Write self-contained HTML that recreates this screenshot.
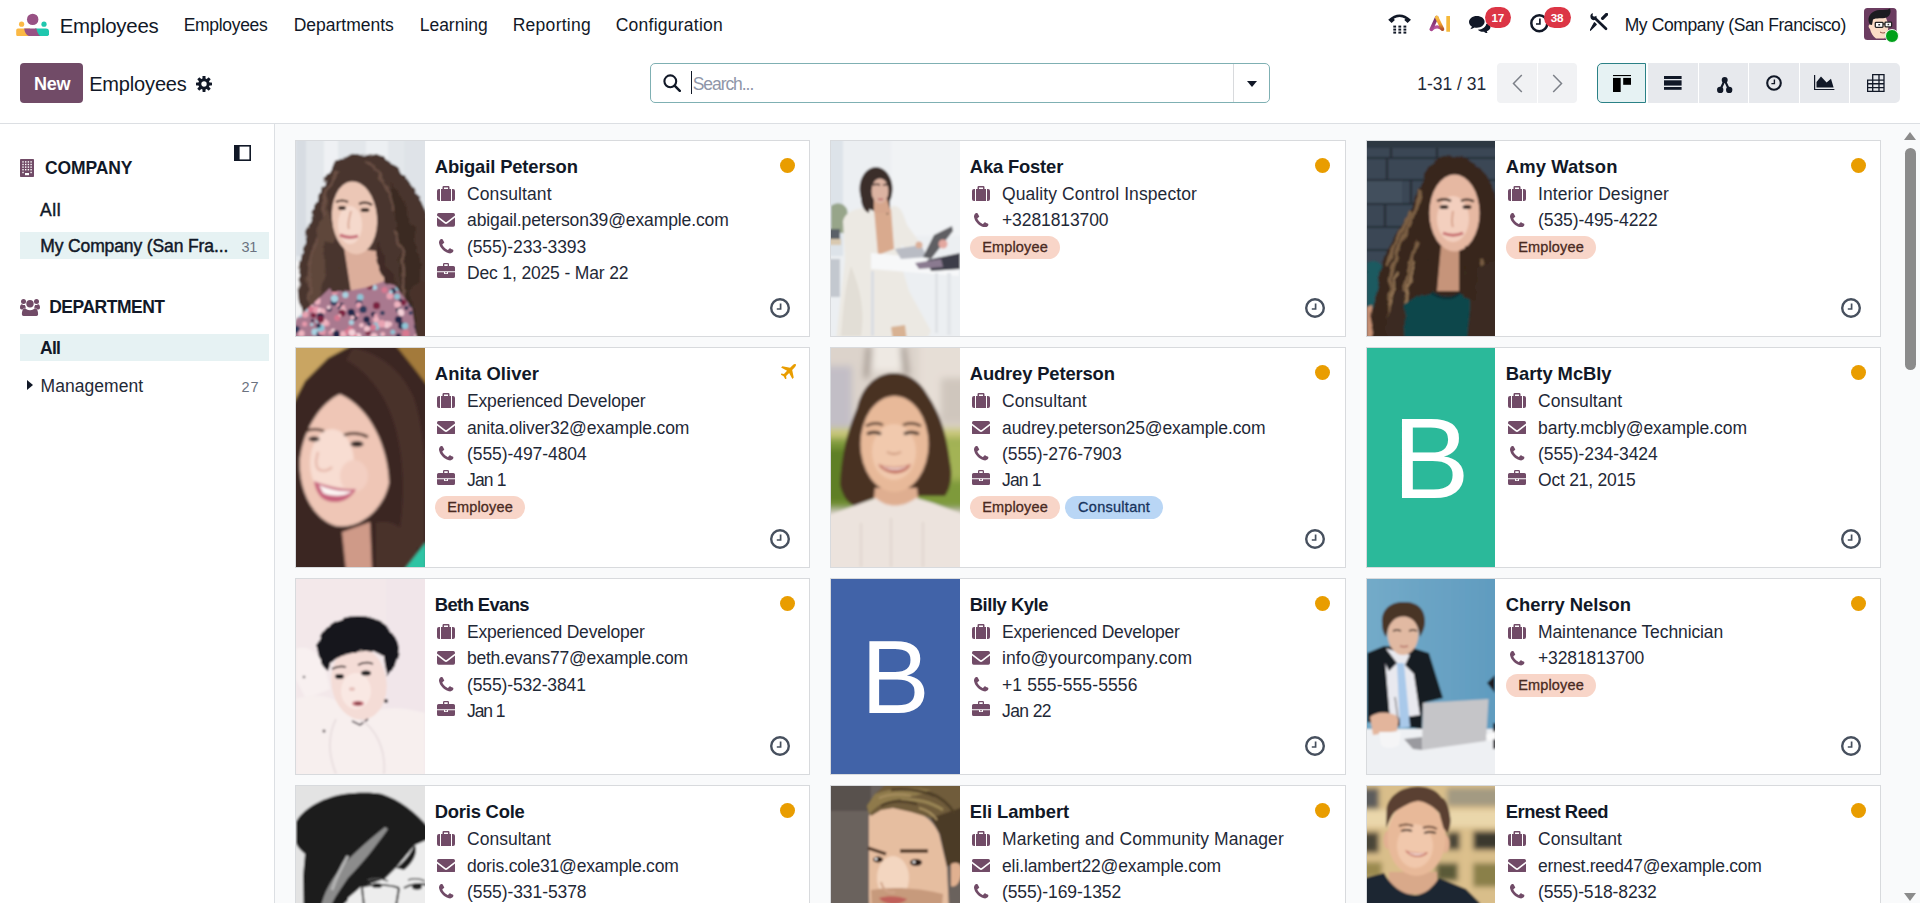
<!DOCTYPE html><html lang="en"><head><meta charset="utf-8"><title>Odoo - Employees</title>
<style>
*{box-sizing:border-box;margin:0;padding:0}
html,body{width:1920px;height:903px;overflow:hidden;background:#fff}
body{font-family:"Liberation Sans",sans-serif;color:#1f2937;position:relative;-webkit-font-smoothing:antialiased}
.t{position:absolute;white-space:nowrap;line-height:1;display:block}
.i{position:absolute;display:block;line-height:0}
.i svg,.ph{display:block}
.m{-webkit-text-stroke:.45px currentColor}
header.nav{position:absolute;left:0;top:0;width:1920px;height:46px;background:#fff}
.cp{position:absolute;left:0;top:46px;width:1920px;height:78px;background:#fff;border-bottom:1px solid #dcdfe3}
.btn-new{position:absolute;left:20px;top:17px;width:63px;height:40px;border-radius:4px;background:#714b67;border:0;padding:0;font-family:inherit;text-align:left}
.search{position:absolute;left:650px;top:17px;width:620px;height:40px;border:1px solid #7fb0b3;border-radius:5px;background:#fff}
.search .sep{position:absolute;left:582px;top:0;width:1px;height:38px;background:#d8dadd}
.search .caret{position:absolute;left:40px;top:7px;width:1px;height:23px;background:#111827}
.tri{position:absolute;width:0;height:0;border-left:5.5px solid transparent;border-right:5.5px solid transparent;border-top:6px solid #111827}
.pager{position:absolute;left:1497px;top:17px;width:80px;height:40px;display:flex;gap:1px}
.pager b{display:block;flex:1;background:#f1f2f4;position:relative}
.pager b:first-child{border-radius:4px 0 0 4px}.pager b:last-child{border-radius:0 4px 4px 0}
.vs{position:absolute;left:1597px;top:17px;width:303px;height:40px;display:flex;gap:1px}
.vs b{display:block;flex:1;background:#e7e9ed;position:relative}
.vs b:first-child{flex:0 0 49px;margin-right:1px;border-radius:5px 0 0 5px;background:#e6f2f3;border:1px solid #2a8186}
.vs b:last-child{border-radius:0 5px 5px 0}
.badge{position:absolute;height:21px;border-radius:11px;background:#dc3545;color:#fff;font-weight:700;font-size:11.7px;line-height:21px;text-align:center;letter-spacing:-.2px}
aside.side{position:absolute;left:0;top:124px;width:275px;height:779px;background:#fff;border-right:1px solid #dcdfe3}
.sel{position:absolute;left:20px;width:249px;background:#e6f2f3}
main.content{position:absolute;left:275px;top:124px;width:1645px;height:779px;background:#f9fafb;overflow:hidden}
article.card{position:absolute;background:#fff;border:1px solid #d8dadd;overflow:hidden}
.photo{position:absolute;left:0;top:0;overflow:hidden}
.ini{position:absolute;left:0;top:0;color:#fff;text-align:center;font-weight:400}
.dot{position:absolute;width:15px;height:15px;border-radius:50%;background:#e99d00}
.tag{position:absolute;height:23px;border-radius:12px;font-size:14.5px;line-height:23px;text-align:center;white-space:nowrap}
.tag{-webkit-text-stroke:.3px currentColor}.tag.o{background:#f8d5c8;color:#4a2a22;letter-spacing:.17px}.tag.b{background:#b9d6f5;color:#17335c;letter-spacing:.28px}
.sb-thumb{position:absolute;left:1905px;top:148px;width:11px;height:222px;border-radius:6px;background:#8b8b8b}
</style></head><body>
<header class="nav">
<span class="i" style="left:15.8px;top:12.5px;"><svg width="33.2" height="23.4" viewBox="0 0 33.2 23.4" ><path d="M2 15.4H14V23.2H2A1.8 1.8 0 0 1 .2 21.4V17.2A1.8 1.8 0 0 1 2 15.4z" fill="#fbb945"/><path d="M19 15.4H30.1A3 3 0 0 1 33.1 18.4V20.2A3 3 0 0 1 30.1 23.2H19z" fill="#1fc7ae"/><path d="M8.2 15.4C8.6 19.5 10.4 22 13.3 23.2H24.5C22.4 21.8 21 19 20.5 15.4z" fill="#985184"/><circle cx="16.7" cy="6.4" r="5.7" fill="#985184"/><circle cx="5.6" cy="11.2" r="2.6" fill="#fbb945"/><circle cx="28" cy="11.2" r="2.6" fill="#1fc7ae"/></svg></span>
<span class="t" style="left:59.7px;top:16.1px;font-size:20.4px;color:#111827;letter-spacing:-0.222px;">Employees</span>
<nav>
<a class="t" style="left:183.7px;top:16.9px;font-size:17.5px;color:#111827;letter-spacing:-0.31px;">Employees</a>
<a class="t" style="left:293.7px;top:16.9px;font-size:17.5px;color:#111827;letter-spacing:-0.009px;">Departments</a>
<a class="t" style="left:419.7px;top:16.9px;font-size:17.5px;color:#111827;letter-spacing:-0.004px;">Learning</a>
<a class="t" style="left:512.7px;top:16.9px;font-size:17.5px;color:#111827;letter-spacing:0.276px;">Reporting</a>
<a class="t" style="left:615.7px;top:16.9px;font-size:17.5px;color:#111827;letter-spacing:0.249px;">Configuration</a>
</nav>
<span class="i" style="left:1387.7px;top:14.4px;"><svg width="23.2" height="19.4" viewBox="0 0 23.2 19.4" ><path d="M.2 5.8Q11.6 -5 23 5.8L19.6 9.1 16.3 5.9 17.5 4.7Q11.6 1.3 5.7 4.7L6.9 5.9 3.6 9.1z" fill="#111827"/><rect x="5.3" y="11.6" width="2.8" height="2" fill="#111827"/><rect x="10.4" y="11.6" width="2.8" height="2" fill="#111827"/><rect x="15.5" y="11.6" width="2.8" height="2" fill="#111827"/><rect x="5.3" y="14.6" width="2.8" height="2" fill="#111827"/><rect x="10.4" y="14.6" width="2.8" height="2" fill="#111827"/><rect x="15.5" y="14.6" width="2.8" height="2" fill="#111827"/><rect x="5.3" y="17.6" width="2.8" height="2" fill="#111827"/><rect x="10.4" y="17.6" width="2.8" height="2" fill="#111827"/><rect x="15.5" y="17.6" width="2.8" height="2" fill="#111827"/></svg></span>
<span class="i" style="left:1428.9px;top:14.8px;"><svg width="21.5" height="17" viewBox="0 0 21.5 17" ><defs><linearGradient id="aig1" x1="0" y1="0" x2="1" y2="0"><stop offset="0" stop-color="#b9539d"/><stop offset=".55" stop-color="#b9539d"/><stop offset="1" stop-color="#b5522a"/></linearGradient><linearGradient id="aig2" x1="0" y1="0" x2="0" y2="1"><stop offset="0" stop-color="#f7bd45"/><stop offset=".55" stop-color="#f0a030"/><stop offset="1" stop-color="#b5522a"/></linearGradient><linearGradient id="aig3" x1="0" y1="0" x2="0" y2="1"><stop offset="0" stop-color="#6f2a66"/><stop offset="1" stop-color="#a8488f"/></linearGradient></defs><path d="M2.4 14.5Q8 9.3 13.5 14.3" fill="none" stroke="url(#aig1)" stroke-width="3.2" stroke-linecap="round"/><path d="M7.7 2.6L2.3 14.2" fill="none" stroke="url(#aig3)" stroke-width="3.5" stroke-linecap="round"/><path d="M7.7 2.4L13.5 14" fill="none" stroke="url(#aig2)" stroke-width="3.5" stroke-linecap="round"/><rect x="17.3" y=".9" width="4" height="15.8" rx=".5" fill="#f6b93b"/></svg></span>
<span class="i" style="left:1469px;top:15.7px;"><svg width="21.6" height="17.8" viewBox="0 0 21.6 17.8" ><path d="M7.8 0C3.5 0 0 2.7 0 6c0 1.9 1.1 3.5 2.9 4.6-.3 1-.9 1.9-1.7 2.6 1.7-.2 3.2-.8 4.4-1.7.7.1 1.4.2 2.2.2 4.3 0 7.8-2.7 7.8-6S12.1 0 7.8 0z" fill="#111827"/><path d="M17.3 7.2c.1 3.6-3.6 6.5-8.6 6.6 1.5 1.5 3.9 2.3 6.4 2 .9.9 2.3 1.6 4.1 1.9-.7-.7-1.2-1.5-1.4-2.4 2.2-.9 3.7-2.5 3.7-4.3 0-1.7-1.6-3.2-4.2-3.8z" fill="#111827"/></svg></span>
<span class="badge" style="left:1485px;top:6.5px;width:25.5px">17</span>
<span class="i" style="left:1529.6px;top:14.4px;"><svg width="18.6" height="18.6" viewBox="0 0 18.6 18.6" ><circle cx="9.3" cy="9.3" r="8" fill="none" stroke="#111827" stroke-width="2.5"/><path d="M9.9 4.5V10H6" fill="none" stroke="#111827" stroke-width="1.7"/></svg></span>
<span class="badge" style="left:1543.5px;top:6.5px;width:27px">38</span>
<span class="i" style="left:1590px;top:13.2px;"><svg width="17.6" height="17.6" viewBox="0 0 17.6 17.6" ><g fill="none" stroke="#111827"><path d="M4.8 5L16 15.8" stroke-width="2.7" stroke-linecap="round"/><path d="M12.6 5.3L16.6 1.4" stroke-width="3.2" stroke-linecap="round"/></g><path d="M6.2 11.5L.3 17.3 2.3 13.6 4.4 9.7z" fill="#111827" stroke="#111827" stroke-width="1.2" stroke-linejoin="round"/><path d="M.4 3.3C.2 1.6 1.4.3 3 .2L2.5 2.6 4.3 3.9 6.3 2.8C7 4.3 6.4 6 5 6.8 3.6 7.5 1.9 7.1 1 5.8.6 5 .4 4.2.4 3.3z" fill="#111827"/></svg></span>
<span class="t" style="left:1624.7px;top:16.9px;font-size:17.5px;color:#111827;letter-spacing:-0.395px;">My Company (San Francisco)</span>
<span class="i" style="left:1864px;top:8px;"><svg width="32.6" height="32" viewBox="0 0 32.6 32" ><rect width="32.6" height="32" rx="3.5" fill="#6b3c60"/><path d="M6 21c-1.5-1-2-3.5-.5-4.5l1.5-.5 1.5-6 13-1.5 2.5 6.5c1 4 0 9-2 12.5l-1.5 3H12c-3-2-5-5.5-6-9.5z" fill="#fbdcc6"/><path d="M4.5 12C4 7 9 2.5 15.5 2c4-.3 8 .2 10.5-1.5C27.5 4 26 8 22.5 9.5 18 11 12 9.5 9 11.5L8 17 6 16.5C5 15 4.6 13.5 4.5 12z" fill="#1c1c20"/><rect x="11.3" y="14.3" width="7.7" height="5" rx=".8" fill="#fff" stroke="#222" stroke-width="1.3"/><rect x="21" y="14.1" width="6.6" height="4.8" rx=".8" fill="#fff" stroke="#222" stroke-width="1.3"/><path d="M19 16h2" stroke="#222" stroke-width="1.2"/><rect x="14.3" y="16" width="1.8" height="1.5" fill="#333"/><rect x="23.6" y="15.8" width="1.6" height="1.5" fill="#333"/><path d="M16 24c1.5 1 3.5 1.2 5 .6" stroke="#8a4a40" stroke-width="1" fill="none"/></svg></span>
<span class="i" style="left:1884.5px;top:28.5px;width:14.5px;height:14.5px;border-radius:50%;background:#00a01a;border:1px solid #f4fff4"></span>
</header>
<div class="cp">
<button class="btn-new" type="button"><span class="t" style="left:14px;top:12.4px;font-size:18px;font-weight:700;color:#fff;letter-spacing:-0.308px;">New</span></button>
<span class="t" style="left:89.2px;top:28.4px;font-size:20px;color:#111827;letter-spacing:-0.167px;">Employees</span>
<span class="i" style="left:196px;top:29.5px;"><svg width="16" height="16" viewBox="0 0 16 16" ><g fill="#111827"><rect x="6.5" y="0" width="3" height="4" rx=".4" transform="rotate(0 8 8)"/><rect x="6.5" y="0" width="3" height="4" rx=".4" transform="rotate(45 8 8)"/><rect x="6.5" y="0" width="3" height="4" rx=".4" transform="rotate(90 8 8)"/><rect x="6.5" y="0" width="3" height="4" rx=".4" transform="rotate(135 8 8)"/><rect x="6.5" y="0" width="3" height="4" rx=".4" transform="rotate(180 8 8)"/><rect x="6.5" y="0" width="3" height="4" rx=".4" transform="rotate(225 8 8)"/><rect x="6.5" y="0" width="3" height="4" rx=".4" transform="rotate(270 8 8)"/><rect x="6.5" y="0" width="3" height="4" rx=".4" transform="rotate(315 8 8)"/></g><circle cx="8" cy="8" r="4.2" fill="none" stroke="#111827" stroke-width="3"/></svg></span>
<div class="search">
<span class="i" style="left:12px;top:10.4px;"><svg width="18" height="18" viewBox="0 0 18 18" ><circle cx="7.3" cy="7.3" r="5.9" fill="none" stroke="#111827" stroke-width="2.1"/><path d="M11.6 11.6L16.8 16.8" stroke="#111827" stroke-width="2.5" stroke-linecap="round"/></svg></span>
<i class="caret"></i>
<span class="t" style="left:41.7px;top:11.7px;font-size:17.5px;color:#8f96a8;letter-spacing:-1.056px;">Search...</span>
<i class="sep"></i><i class="tri" style="left:596px;top:17px"></i>
</div>
<span class="t" style="left:1417.2px;top:29.9px;font-size:17.5px;letter-spacing:0.003px;">1-31 / 31</span>
<div class="pager"><b><span class="i" style="left:14.5px;top:10.5px;"><svg width="11" height="19" viewBox="0 0 11 19"><path d="M9.8 1L1.5 9.5 9.8 18" fill="none" stroke="#7c8088" stroke-width="1.5"/></svg></span></b><b><span class="i" style="left:14px;top:10.5px;"><svg width="11" height="19" viewBox="0 0 11 19"><path d="M1.2 1L9.5 9.5 1.2 18" fill="none" stroke="#7c8088" stroke-width="1.5"/></svg></span></b></div>
<div class="vs">
<b><span class="i" style="left:14.8px;top:10.9px;"><svg width="18.4" height="17.6" viewBox="0 0 18.4 17.6" ><rect x="0" y="0" width="18.4" height="1.1" fill="#000"/><rect x="0" y="2.9" width="7.7" height="14.7" fill="#000"/><rect x="10.2" y="2.9" width="8.2" height="6.9" fill="#000"/></svg></span></b>
<b><span class="i" style="left:16.4px;top:13px;"><svg width="17.6" height="13.8" viewBox="0 0 17.6 13.8" ><rect x="0" y="0" width="17.6" height="3" fill="#111827"/><rect x="0" y="4.3" width="17.6" height="5.3" fill="#111827"/><rect x="0" y="11" width="17.6" height="2.8" fill="#111827"/></svg></span></b>
<b><span class="i" style="left:18.7px;top:13.8px;"><svg width="15.4" height="16.2" viewBox="0 0 15.4 16.2" ><g fill="#111827" stroke="#111827"><circle cx="7.7" cy="3.1" r="3" stroke="none"/><circle cx="3.2" cy="13" r="3.2" stroke="none"/><circle cx="12.2" cy="13" r="3.2" stroke="none"/><path d="M7.7 3.1L3.2 13M7.7 3.1L12.2 13" stroke-width="2.2" fill="none"/></g></svg></span></b>
<b><span class="i" style="left:17.2px;top:12.4px;"><svg width="16" height="16" viewBox="0 0 16 16" ><circle cx="8" cy="8" r="6.8" fill="none" stroke="#111827" stroke-width="2.1"/><path d="M8.4 4.6V8.6H5.4" fill="none" stroke="#111827" stroke-width="1.4"/></svg></span></b>
<b><span class="i" style="left:14.7px;top:12.4px;"><svg width="20.6" height="15.2" viewBox="0 0 20.6 15.2" ><path d="M.6 0V14.5H20.4" fill="none" stroke="#111827" stroke-width="1.2"/><path d="M2.5 12.6V6.9L7 1.5L12.6 7.4L17 3.8L19.6 12.6z" fill="#111827"/></svg></span></b>
<b><span class="i" style="left:16.6px;top:11.2px;"><svg width="17.6" height="17.9" viewBox="0 0 17.6 17.9" ><path d="M5.7 0.6H17M0.6 6.2H17M0.6 9.75H17M0.6 13.7H17M0.6 17.3H17M0.6 6.2V17.3M5.7 0.6V17.3M12 0.6V17.3M17 0.6V17.3" fill="none" stroke="#111827" stroke-width="1.3" stroke-linecap="square"/></svg></span></b>
</div>
</div>
<aside class="side">
<span class="i" style="left:234px;top:21px;"><svg width="17" height="16" viewBox="0 0 17 16" ><rect x=".8" y=".8" width="15.4" height="14.4" fill="none" stroke="#111827" stroke-width="1.6"/><rect x="0" y="0" width="5.6" height="16" fill="#111827"/></svg></span>
<span class="i" style="left:20px;top:34.5px;"><svg width="14" height="18" viewBox="0 0 14 18" ><rect x="0" y="0" width="14" height="18" rx=".8" fill="#714b67"/><rect x="2.3" y="2.2" width="1.4" height="1.4" fill="#fff"/><rect x="5" y="2.2" width="1.4" height="1.4" fill="#fff"/><rect x="7.7" y="2.2" width="1.4" height="1.4" fill="#fff"/><rect x="10.400000000000002" y="2.2" width="1.4" height="1.4" fill="#fff"/><rect x="2.3" y="4.800000000000001" width="1.4" height="1.4" fill="#fff"/><rect x="5" y="4.800000000000001" width="1.4" height="1.4" fill="#fff"/><rect x="7.7" y="4.800000000000001" width="1.4" height="1.4" fill="#fff"/><rect x="10.400000000000002" y="4.800000000000001" width="1.4" height="1.4" fill="#fff"/><rect x="2.3" y="7.4" width="1.4" height="1.4" fill="#fff"/><rect x="5" y="7.4" width="1.4" height="1.4" fill="#fff"/><rect x="7.7" y="7.4" width="1.4" height="1.4" fill="#fff"/><rect x="10.400000000000002" y="7.4" width="1.4" height="1.4" fill="#fff"/><rect x="2.3" y="10" width="1.4" height="1.4" fill="#fff"/><rect x="5" y="10" width="1.4" height="1.4" fill="#fff"/><rect x="7.7" y="10" width="1.4" height="1.4" fill="#fff"/><rect x="10.400000000000002" y="10" width="1.4" height="1.4" fill="#fff"/><rect x="2.3" y="12.8" width="1.4" height="1.4" fill="#fff"/><rect x="10.4" y="12.8" width="1.4" height="1.4" fill="#fff"/><rect x="5" y="14" width="4" height="2.2" fill="#fff"/></svg></span>
<span class="t" style="left:45px;top:35.8px;font-size:17.5px;font-weight:700;color:#111827;letter-spacing:-0.126px;">COMPANY</span>
<span class="t m" style="left:40.1px;top:77.6px;font-size:17.5px;color:#111827;letter-spacing:0.573px;">All</span>
<div class="sel" style="top:108px;height:26.5px"></div>
<span class="t m" style="left:40.2px;top:113.6px;font-size:17.5px;color:#111827;letter-spacing:-0.12px;">My Company (San Fra...</span>
<span class="t" style="left:241.5px;top:115.9px;font-size:14.5px;color:#6b7280;letter-spacing:-0.341px;">31</span>
<span class="i" style="left:20.2px;top:173.8px;"><svg width="20" height="18" viewBox="0 0 20 18" ><g fill="#714b67"><circle cx="10" cy="5.8" r="3.7"/><path d="M3.6 18c-1 0-1.7-.7-1.7-1.7 0-3.3 1-6 3.3-6 .6.7 2.3 1.9 4.8 1.9s4.2-1.2 4.8-1.9c2.3 0 3.3 2.7 3.3 6 0 1-.7 1.7-1.7 1.7z"/><circle cx="3.5" cy="3.4" r="2.5"/><circle cx="16.5" cy="3.4" r="2.5"/><path d="M0 9.6C0 7.6.7 6.2 2 6.2c.8.7 1.8 1 2.9.8.2.9.6 1.7 1.2 2.4-1.5.1-2.6.8-3.3 2.1H1.6C.6 11.5 0 10.9 0 9.6z"/><path d="M20 9.6c0-2-.7-3.4-2-3.4-.8.7-1.8 1-2.9.8-.2.9-.6 1.7-1.2 2.4 1.5.1 2.6.8 3.3 2.1h1.2c1 0 1.6-.6 1.6-1.9z"/></g></svg></span>
<span class="t" style="left:49.2px;top:174.8px;font-size:17.5px;font-weight:700;color:#111827;letter-spacing:-0.493px;">DEPARTMENT</span>
<div class="sel" style="top:210px;height:26.7px"></div>
<span class="t" style="left:40.1px;top:215.5px;font-size:17.5px;font-weight:700;color:#111827;letter-spacing:-0.737px;">All</span>
<i class="i" style="left:27px;top:256.2px;width:0;height:0;border-top:5.7px solid transparent;border-bottom:5.7px solid transparent;border-left:6.3px solid #111827"></i>
<span class="t" style="left:40.5px;top:253.5px;font-size:17.5px;letter-spacing:0.049px;">Management</span>
<span class="t" style="left:241.5px;top:256px;font-size:14.5px;color:#6b7280;letter-spacing:1.059px;">27</span>
</aside>
<main class="content">
<article class="card" style="left:20px;top:16px;width:515px;height:197px">
<div class="photo" style="width:129px;height:195px"><svg class="ph" width="129" height="195" viewBox="0 0 129 195" preserveAspectRatio="none"><defs><filter id="bp1" x="-10%" y="-10%" width="120%" height="120%"><feGaussianBlur stdDeviation="1.1"/></filter><clipPath id="cp1"><rect width="129" height="195"/></clipPath></defs><rect width="129" height="195" fill="#e2e6ea"/><g clip-path="url(#cp1)"><g filter="url(#bp1)"><defs><filter id="k1" x="-20%" y="-20%" width="140%" height="140%"><feTurbulence type="fractalNoise" baseFrequency="0.085" numOctaves="2" seed="4" result="n"/><feDisplacementMap in="SourceGraphic" in2="n" scale="9" xChannelSelector="R" yChannelSelector="G"/></filter><clipPath id="d1"><path d="M0 178L17 163 35 146 52 150 72 146 94 138 116 167 121 200H-5Z"/></clipPath></defs>
<rect x="-5" y="-5" width="140" height="205" fill="#e3e7eb"/>
<rect x="0" y="-5" width="10" height="120" fill="#d7dce2"/><rect x="28" y="-5" width="14" height="60" fill="#eff1f4"/>
<rect x="70" y="-5" width="22" height="40" fill="#edf0f3"/><rect x="108" y="-5" width="25" height="70" fill="#dfe3e8"/>
<rect x="-5" y="120" width="20" height="80" fill="#f2f2f3"/>
<g filter="url(#k1)">
<path d="M62 13C45 14 32 27 26 50 16 72 8 95 4 125 1 145 3 165 9 180L40 200H135V82C126 58 113 34 91 18 81 13 71 12 62 13Z" fill="#4a352d"/>
<path d="M30 60C22 85 14 110 10 140 12 160 16 172 22 178 26 150 30 120 38 95Z" fill="#5e463b"/>
<path d="M95 40C110 60 120 90 124 130 126 160 124 180 120 195H100C108 150 104 90 95 40Z" fill="#3b2923"/>
<path d="M70 20C85 30 95 50 98 70M40 30C32 45 28 60 27 75M100 90C108 110 110 140 106 170M20 100C14 120 12 140 14 160" stroke="#6a5044" stroke-width="3" fill="none"/>
</g>
<path d="M48 106L80 110 90 141 72 147 55 151Z" fill="#dcae9b"/>
<ellipse cx="58.5" cy="77" rx="22.5" ry="36.5" fill="#ecc7b6" transform="rotate(-5 58 77)"/>
<ellipse cx="54" cy="84" rx="12" ry="19" fill="#f5d9cc"/>
<path d="M40 61q6-3 12 0M63 63q7-3 13 1" stroke="#3a2820" stroke-width="2.2" fill="none"/>
<ellipse cx="46" cy="67" rx="4" ry="2" fill="#33241f"/><ellipse cx="69" cy="69" rx="4.5" ry="2" fill="#33241f"/>
<path d="M55 70C53 78 51 84 53 88" stroke="#dcae9c" stroke-width="2" fill="none"/>
<path d="M44 94q8 4 18 1" stroke="#c8707a" stroke-width="3.2" fill="none"/>
<g clip-path="url(#d1)"><rect x="-5" y="130" width="140" height="70" fill="#a9798f"/><circle cx="55.2" cy="171.3" r="3.6" fill="#232848"/><circle cx="55.1" cy="187.9" r="2" fill="#d87890"/><circle cx="58" cy="174.4" r="2" fill="#232848"/><circle cx="37" cy="145.1" r="3.4" fill="#f2c2cc"/><circle cx="77.4" cy="173.3" r="2.5" fill="#232848"/><circle cx="79.8" cy="174.5" r="1.9" fill="#e8a3b2"/><circle cx="101.5" cy="143.5" r="1.7" fill="#a9d3e2"/><circle cx="73.2" cy="183.6" r="2.3" fill="#2f3a5c"/><circle cx="102.8" cy="169.1" r="3" fill="#232848"/><circle cx="0.6" cy="144.8" r="3" fill="#f4d0d8"/><circle cx="121.7" cy="195.8" r="3.4" fill="#f2c2cc"/><circle cx="31" cy="182.4" r="2.7" fill="#e8a3b2"/><circle cx="8.6" cy="182.9" r="2.5" fill="#e79aac"/><circle cx="47.2" cy="193.7" r="3.5" fill="#e8a3b2"/><circle cx="26" cy="191.9" r="1.7" fill="#f4d0d8"/><circle cx="119.6" cy="162.3" r="1.8" fill="#8fc4d6"/><circle cx="24.2" cy="177.8" r="2.3" fill="#e79aac"/><circle cx="40.6" cy="194" r="3.3" fill="#232848"/><circle cx="16.4" cy="179.6" r="1.6" fill="#232848"/><circle cx="97.2" cy="149.9" r="2.8" fill="#232848"/><circle cx="62.1" cy="195.2" r="3.3" fill="#f4d0d8"/><circle cx="78.5" cy="146.5" r="2.5" fill="#a9d3e2"/><circle cx="0.1" cy="188.4" r="3.7" fill="#2f3a5c"/><circle cx="37.1" cy="189.6" r="2.1" fill="#f4d0d8"/><circle cx="121.5" cy="173.7" r="2.9" fill="#e8a3b2"/><circle cx="120.7" cy="151.9" r="2.2" fill="#2f3a5c"/><circle cx="40.1" cy="156.6" r="1.8" fill="#232848"/><circle cx="25.5" cy="175.6" r="1.6" fill="#7a2240"/><circle cx="45.3" cy="165.4" r="3.7" fill="#232848"/><circle cx="101.5" cy="147.6" r="2.4" fill="#8fc4d6"/><circle cx="18.8" cy="190.9" r="3.4" fill="#a9d3e2"/><circle cx="88.5" cy="148.9" r="3" fill="#d87890"/><circle cx="24" cy="193.2" r="3.5" fill="#2f3a5c"/><circle cx="9.6" cy="142.7" r="1.8" fill="#d87890"/><circle cx="117.4" cy="153.4" r="3.2" fill="#e79aac"/><circle cx="51.3" cy="190.7" r="2.7" fill="#d87890"/><circle cx="21.4" cy="180.3" r="1.8" fill="#a9d3e2"/><circle cx="58.5" cy="176.6" r="3" fill="#232848"/><circle cx="34.2" cy="191.4" r="2" fill="#e8a3b2"/><circle cx="8.4" cy="163" r="2.1" fill="#e8a3b2"/><circle cx="21.5" cy="160.7" r="2.9" fill="#efb4c0"/><circle cx="11.2" cy="147.8" r="2.6" fill="#7a2240"/><circle cx="80.1" cy="178.7" r="2.9" fill="#efb4c0"/><circle cx="72" cy="191.7" r="2.6" fill="#7a2240"/><circle cx="85.5" cy="193.9" r="1.6" fill="#8fc4d6"/><circle cx="9.1" cy="143.8" r="2.3" fill="#efb4c0"/><circle cx="121.9" cy="144.2" r="2.8" fill="#f2c2cc"/><circle cx="5.4" cy="192.4" r="3.2" fill="#efb4c0"/><circle cx="96.8" cy="191.2" r="2.4" fill="#8fc4d6"/><circle cx="57.7" cy="144.3" r="3.5" fill="#e8a3b2"/><circle cx="105.3" cy="172.1" r="3" fill="#f4d0d8"/><circle cx="46.3" cy="140.7" r="1.8" fill="#232848"/><circle cx="78" cy="195.6" r="3.5" fill="#f2c2cc"/><circle cx="40.3" cy="192.3" r="3.1" fill="#232848"/><circle cx="53.7" cy="186.9" r="1.8" fill="#d87890"/><circle cx="3.6" cy="173.7" r="2.7" fill="#a9d3e2"/><circle cx="116.8" cy="146.3" r="3.3" fill="#8fc4d6"/><circle cx="112.3" cy="154.3" r="1.6" fill="#e79aac"/><circle cx="17.5" cy="174.3" r="2.7" fill="#7a2240"/><circle cx="80.5" cy="164.7" r="3.6" fill="#7a2240"/><circle cx="49.4" cy="154" r="3" fill="#a9d3e2"/><circle cx="107.4" cy="161.5" r="2.9" fill="#7a2240"/><circle cx="25.6" cy="147.5" r="2.4" fill="#e8a3b2"/><circle cx="86.8" cy="193.2" r="2.2" fill="#efb4c0"/><circle cx="13.8" cy="166.4" r="3.6" fill="#f4d0d8"/><circle cx="46.7" cy="169.1" r="3.1" fill="#f2c2cc"/><circle cx="102.4" cy="195" r="2.6" fill="#232848"/><circle cx="101.1" cy="155.6" r="2.9" fill="#8fc4d6"/><circle cx="86.5" cy="172" r="2.3" fill="#2f3a5c"/><circle cx="2.3" cy="147.6" r="2.6" fill="#e8a3b2"/><circle cx="93.8" cy="154.9" r="3.3" fill="#e8a3b2"/><circle cx="120" cy="146.5" r="1.8" fill="#d87890"/><circle cx="79.9" cy="185.2" r="3.7" fill="#8fc4d6"/><circle cx="24.2" cy="186.1" r="2.2" fill="#f2c2cc"/><circle cx="1.3" cy="166.4" r="3.2" fill="#efb4c0"/><circle cx="27.6" cy="183.6" r="2.8" fill="#d87890"/><circle cx="61.1" cy="195.8" r="2" fill="#f2c2cc"/><circle cx="110.6" cy="144.9" r="3.7" fill="#f2c2cc"/><circle cx="47.3" cy="165.2" r="2" fill="#e8a3b2"/><circle cx="46" cy="171.9" r="3.5" fill="#7a2240"/><circle cx="56.6" cy="176.5" r="2.1" fill="#f2c2cc"/><circle cx="105.7" cy="184.7" r="3.6" fill="#232848"/><circle cx="26" cy="190.4" r="3.8" fill="#e79aac"/><circle cx="65.5" cy="184.3" r="2.3" fill="#f2c2cc"/><circle cx="104.4" cy="159.5" r="1.8" fill="#232848"/><circle cx="41.7" cy="163.6" r="2.2" fill="#e8a3b2"/><circle cx="26.6" cy="188.6" r="2.5" fill="#e8a3b2"/><circle cx="21.1" cy="158.8" r="3.3" fill="#efb4c0"/><circle cx="57.4" cy="196" r="3.6" fill="#d87890"/><circle cx="102.5" cy="178.6" r="3.7" fill="#232848"/><circle cx="70.6" cy="178.6" r="3.3" fill="#232848"/><circle cx="64.3" cy="156.2" r="3.2" fill="#8fc4d6"/><circle cx="20.1" cy="168.8" r="3.6" fill="#e79aac"/><circle cx="38" cy="161.3" r="3.5" fill="#2f3a5c"/><circle cx="25.4" cy="187.6" r="3.7" fill="#d87890"/><circle cx="33.3" cy="167.9" r="2.5" fill="#232848"/><circle cx="61.4" cy="173.9" r="1.7" fill="#e8a3b2"/><circle cx="63" cy="162.4" r="3.4" fill="#2f3a5c"/><circle cx="14.9" cy="145.2" r="2" fill="#d87890"/><circle cx="56" cy="191.6" r="3.4" fill="#f4d0d8"/><circle cx="32.8" cy="166.5" r="1.9" fill="#f4d0d8"/><circle cx="109.9" cy="192.4" r="3.6" fill="#d87890"/><circle cx="38.7" cy="150.7" r="3" fill="#e79aac"/><circle cx="15.8" cy="183.6" r="1.7" fill="#a9d3e2"/><circle cx="19" cy="140.7" r="2.2" fill="#f2c2cc"/><circle cx="43.4" cy="174.7" r="1.8" fill="#f2c2cc"/><circle cx="71" cy="187.7" r="3" fill="#f2c2cc"/><circle cx="24.1" cy="169.7" r="2.6" fill="#f4d0d8"/><circle cx="77.2" cy="186.2" r="3" fill="#d87890"/><circle cx="24.9" cy="175.4" r="3" fill="#d87890"/><circle cx="26.4" cy="170.4" r="2.9" fill="#efb4c0"/><circle cx="28.4" cy="181.5" r="3.4" fill="#efb4c0"/><circle cx="38.5" cy="157.6" r="3.6" fill="#a9d3e2"/><circle cx="95" cy="150.9" r="1.8" fill="#a9d3e2"/><circle cx="16.2" cy="144.9" r="2.5" fill="#f4d0d8"/><circle cx="101.5" cy="163.6" r="3.3" fill="#efb4c0"/><circle cx="24.5" cy="175.2" r="3.4" fill="#232848"/><circle cx="24.5" cy="178.2" r="3.6" fill="#7a2240"/><circle cx="14.1" cy="168.3" r="3.3" fill="#d87890"/><circle cx="121.8" cy="186.6" r="3.4" fill="#232848"/><circle cx="13" cy="142.1" r="2.8" fill="#d87890"/><circle cx="110.4" cy="167" r="2" fill="#232848"/><circle cx="24.9" cy="187.1" r="3.8" fill="#8fc4d6"/><circle cx="11.6" cy="143.5" r="3.7" fill="#232848"/><circle cx="9.5" cy="145.4" r="2.5" fill="#f4d0d8"/><circle cx="62.9" cy="164.1" r="2.9" fill="#e8a3b2"/><circle cx="77.3" cy="142.3" r="2" fill="#f4d0d8"/><circle cx="55.4" cy="181.4" r="2.5" fill="#a9d3e2"/><circle cx="73.8" cy="145.3" r="3.3" fill="#7a2240"/><circle cx="109" cy="184.9" r="3.2" fill="#8fc4d6"/><circle cx="114.6" cy="171.9" r="2" fill="#2f3a5c"/><circle cx="119.9" cy="185.1" r="2.2" fill="#232848"/><circle cx="90.8" cy="183.6" r="3.4" fill="#f4d0d8"/><circle cx="16.3" cy="158.5" r="2.8" fill="#7a2240"/><circle cx="93.6" cy="182.9" r="2.5" fill="#f2c2cc"/><circle cx="22.5" cy="184.7" r="2.3" fill="#232848"/><circle cx="1.3" cy="159.9" r="3" fill="#2f3a5c"/><circle cx="6" cy="155.3" r="3.7" fill="#e79aac"/><circle cx="41.2" cy="176.9" r="2.9" fill="#d87890"/><circle cx="9.4" cy="168.8" r="2.7" fill="#a9d3e2"/><circle cx="85.6" cy="182.7" r="3.8" fill="#e8a3b2"/><circle cx="14" cy="146.1" r="2.1" fill="#232848"/><circle cx="49" cy="142.8" r="2" fill="#f4d0d8"/><circle cx="1.3" cy="154.5" r="2.2" fill="#7a2240"/><circle cx="67.1" cy="168.4" r="3.7" fill="#2f3a5c"/><circle cx="103.3" cy="145.6" r="2.6" fill="#8fc4d6"/><circle cx="9.3" cy="173.5" r="3.3" fill="#e8a3b2"/><circle cx="47.1" cy="192.6" r="2.4" fill="#efb4c0"/><circle cx="104.4" cy="170.3" r="2.9" fill="#f4d0d8"/><circle cx="115.3" cy="163.6" r="2.8" fill="#2f3a5c"/></g>
<path d="M112 148C118 163 122 180 122 200H135V138Z" fill="#48332b" filter="url(#k1)"/><path d="M30 100C26 120 28 140 36 150L50 150C44 135 44 120 47 108Z" fill="#4a352d" filter="url(#k1)"/><path d="M82 100C88 115 94 130 100 146L88 142C84 130 80 118 80 108Z" fill="#3f2c25" filter="url(#k1)"/>
</g></g></svg></div>
<h3 class="t" style="left:138.8px;top:17.3px;font-size:18.4px;font-weight:700;color:#111827;letter-spacing:-0.135px;">Abigail Peterson</h3>
<span class="i" style="left:141.4px;top:44.7px;"><svg width="18" height="15" viewBox="0 0 18 15" ><path fill="#714b67" d="M2 3h1v12H2a2 2 0 0 1-2-2V5a2 2 0 0 1 2-2z"/><path fill="#714b67" d="M15 3h1a2 2 0 0 1 2 2v8a2 2 0 0 1-2 2h-1z"/><path fill="#714b67" fill-rule="evenodd" d="M4 3h1.5V1.2A1.2 1.2 0 0 1 6.7 0h4.6a1.2 1.2 0 0 1 1.2 1.2V3H14v12H4zM7 1.4V3h4V1.4z"/></svg></span>
<span class="t" style="left:171px;top:45px;font-size:17.5px;letter-spacing:0.092px;">Consultant</span>
<span class="i" style="left:141.4px;top:71.8px;"><svg width="18" height="13.8" viewBox="0 0 18 13" preserveAspectRatio="none"><path fill="#714b67" d="M0 4.3V11.4A1.6 1.6 0 0 0 1.6 13h14.8A1.6 1.6 0 0 0 18 11.4V4.3L10.6 9.7a2.7 2.7 0 0 1-3.2 0z"/><path fill="#714b67" d="M1.6 0A1.6 1.6 0 0 0 0 1.6v.7l8.1 6a1.5 1.5 0 0 0 1.8 0l8.1-6v-.7A1.6 1.6 0 0 0 16.4 0z"/></svg></span>
<span class="t" style="left:171px;top:71.2px;font-size:17.5px;letter-spacing:-0.105px;">abigail.peterson39@example.com</span>
<span class="i" style="left:143.2px;top:98.4px;"><svg width="14.4" height="14.4" viewBox="0 0 1408 1408" ><path fill="#714b67" d="M1408 1112q0 27 -10 70.5t-21 68.5q-21 50 -122 106q-94 51 -186 51q-27 0 -53 -3.5t-57.5 -12.5t-47 -14.5t-55.5 -20.5t-49 -18q-98 -35 -175 -83q-127 -79 -264 -216t-216 -264q-48 -77 -83 -175q-3 -9 -18 -49t-20.5 -55.5t-14.5 -47t-12.5 -57.5t-3.5 -53q0 -92 51 -186q56 -101 106 -122q25 -11 68.5 -21t70.5 -10q14 0 21 3q18 6 53 76q11 19 30 54t35 63.5t31 53.5q3 4 17.5 25t21.5 35.5t7 28.5q0 20 -28.5 50t-62 55t-62 53t-28.5 46q0 9 5 22.5t8.5 20.5t14 24t11.5 19q76 137 174 235t235 174q2 1 19 11.5t24 14t20.5 8.5t22.5 5q18 0 46 -28.5t53 -62t55 -62t50 -28.5q14 0 28.5 7t35.5 21.5t25 17.5q25 15 53.5 31t63.5 35t54 30q70 35 76 53q3 7 3 21z"/></svg></span>
<span class="t" style="left:171px;top:97.5px;font-size:17.5px;letter-spacing:-0.111px;">(555)-233-3393</span>
<span class="i" style="left:141.4px;top:122.4px;"><svg width="18" height="15" viewBox="0 0 18 15" ><path fill="#714b67" fill-rule="evenodd" d="M6 3V1.3A1.3 1.3 0 0 1 7.3 0h3.4A1.3 1.3 0 0 1 12 1.3V3h4.4A1.6 1.6 0 0 1 18 4.6V8.3H0V4.6A1.6 1.6 0 0 1 1.6 3zM7.3 1.3V3h3.4V1.3z"/><path fill="#714b67" d="M0 9.3h7v1.1a.6.6 0 0 0 .6.6h2.8a.6.6 0 0 0 .6-.6V9.3h7v4.1A1.6 1.6 0 0 1 16.4 15H1.6A1.6 1.6 0 0 1 0 13.4z"/><rect fill="#714b67" x="8" y="9.3" width="2" height=".9"/></svg></span>
<span class="t" style="left:171px;top:123.7px;font-size:17.5px;letter-spacing:-0.152px;">Dec 1, 2025 - Mar 22</span>
<i class="dot" style="left:484.4px;top:17px"></i>
<span class="i" style="left:473.6px;top:157.4px;"><svg width="20" height="20" viewBox="0 0 20 20" ><circle cx="10" cy="10" r="8.8" fill="none" stroke="#47505e" stroke-width="2.4"/><path d="M10.6 5.5V11H6.8" fill="none" stroke="#47505e" stroke-width="1.7"/></svg></span>
</article>
<article class="card" style="left:555px;top:16px;width:516px;height:197px">
<div class="photo" style="width:129px;height:195px"><svg class="ph" width="129" height="195" viewBox="0 0 129 195" preserveAspectRatio="none"><defs><filter id="bp2" x="-10%" y="-10%" width="120%" height="120%"><feGaussianBlur stdDeviation="1.3"/></filter><clipPath id="cp2"><rect width="129" height="195"/></clipPath></defs><rect width="129" height="195" fill="#eceff2"/><g clip-path="url(#cp2)"><g filter="url(#bp2)">
<rect x="-5" y="-5" width="140" height="205" fill="#eceff2"/>
<rect x="-5" y="-5" width="17" height="120" fill="#dde3e9"/>
<rect x="60" y="-5" width="75" height="100" fill="#f1f3f5"/>
<path d="M0 65C6 60 13 62 16 68 18 76 15 84 13 92H0Z" fill="#97a58a"/>
<rect x="-2" y="88" width="11" height="10" fill="#5a6168"/>
<rect x="-2" y="98" width="12" height="6" fill="#d9c9b0"/>
<rect x="-2" y="118" width="11" height="38" fill="#c3c8cf"/>
<path d="M12 80C14 72 22 68 32 67L64 65C70 66 72 72 76 84L92 106 84 112 70 104 72 130 78 150 100 190 95 200H5C8 170 12 140 14 118Z" fill="#ece9e3"/>
<path d="M20 125C30 150 34 170 30 195H10C12 170 14 145 20 125Z" fill="#e2ded6"/>
<path d="M43 68L60 68 63 108 47 114Z" fill="#d9aa8e"/>
<ellipse cx="45" cy="48" rx="16.5" ry="22" fill="#3b2d2b"/>
<path d="M30 50C29 62 32 70 38 72L40 50Z" fill="#3b2d2b"/><path d="M56 50C60 62 60 70 56 74L52 52Z" fill="#3b2d2b"/>
<path d="M43 58L56 58 60 72 43 72Z" fill="#d6a68c"/><ellipse cx="49" cy="50" rx="8.5" ry="12.5" fill="#dcb3a2"/>
<path d="M42 44q4-1.5 7 0M52 44q3-1 5 0" stroke="#3a2a28" stroke-width="1.5" fill="none"/>
<path d="M47 58q3 1 5 0" stroke="#b96a6a" stroke-width="1.6" fill="none"/>
<path d="M40 112L128 120V135L40 128Z" fill="#f7f8f9"/>
<path d="M64 108L90 104 96 116 70 118Z" fill="#b9bcc4"/>
<path d="M92 116L103 94 121 85 122 90 100 118Z" fill="#5f5f63"/>
<circle cx="112" cy="103" r="4.5" fill="#e3a8a0"/><circle cx="88" cy="104" r="3.5" fill="#dcb09a"/>
<path d="M96 119L129 112V128L100 130Z" fill="#3d3c48"/>
<path d="M84 122L110 118 112 126 88 128Z" fill="#8a7a90"/>
<rect x="104" y="132" width="3" height="60" fill="#dfe2e6"/><rect x="116" y="132" width="4" height="62" fill="#e2e5e9"/>
<rect x="40" y="130" width="3" height="65" fill="#dadde2"/>
<path d="M60 186L74 184 76 200H62Z" fill="#d8b293"/>
</g></g></svg></div>
<h3 class="t" style="left:138.8px;top:17.3px;font-size:18.4px;font-weight:700;color:#111827;letter-spacing:-0.174px;">Aka Foster</h3>
<span class="i" style="left:141.4px;top:44.7px;"><svg width="18" height="15" viewBox="0 0 18 15" ><path fill="#714b67" d="M2 3h1v12H2a2 2 0 0 1-2-2V5a2 2 0 0 1 2-2z"/><path fill="#714b67" d="M15 3h1a2 2 0 0 1 2 2v8a2 2 0 0 1-2 2h-1z"/><path fill="#714b67" fill-rule="evenodd" d="M4 3h1.5V1.2A1.2 1.2 0 0 1 6.7 0h4.6a1.2 1.2 0 0 1 1.2 1.2V3H14v12H4zM7 1.4V3h4V1.4z"/></svg></span>
<span class="t" style="left:171px;top:45px;font-size:17.5px;letter-spacing:0.096px;">Quality Control Inspector</span>
<span class="i" style="left:143.2px;top:72.1px;"><svg width="14.4" height="14.4" viewBox="0 0 1408 1408" ><path fill="#714b67" d="M1408 1112q0 27 -10 70.5t-21 68.5q-21 50 -122 106q-94 51 -186 51q-27 0 -53 -3.5t-57.5 -12.5t-47 -14.5t-55.5 -20.5t-49 -18q-98 -35 -175 -83q-127 -79 -264 -216t-216 -264q-48 -77 -83 -175q-3 -9 -18 -49t-20.5 -55.5t-14.5 -47t-12.5 -57.5t-3.5 -53q0 -92 51 -186q56 -101 106 -122q25 -11 68.5 -21t70.5 -10q14 0 21 3q18 6 53 76q11 19 30 54t35 63.5t31 53.5q3 4 17.5 25t21.5 35.5t7 28.5q0 20 -28.5 50t-62 55t-62 53t-28.5 46q0 9 5 22.5t8.5 20.5t14 24t11.5 19q76 137 174 235t235 174q2 1 19 11.5t24 14t20.5 8.5t22.5 5q18 0 46 -28.5t53 -62t55 -62t50 -28.5q14 0 28.5 7t35.5 21.5t25 17.5q25 15 53.5 31t63.5 35t54 30q70 35 76 53q3 7 3 21z"/></svg></span>
<span class="t" style="left:171px;top:71.2px;font-size:17.5px;letter-spacing:-0.095px;">+3281813700</span>
<span class="tag o" style="left:139.4px;top:95.2px;width:89.4px">Employee</span>
<i class="dot" style="left:484.4px;top:17px"></i>
<span class="i" style="left:473.6px;top:157.4px;"><svg width="20" height="20" viewBox="0 0 20 20" ><circle cx="10" cy="10" r="8.8" fill="none" stroke="#47505e" stroke-width="2.4"/><path d="M10.6 5.5V11H6.8" fill="none" stroke="#47505e" stroke-width="1.7"/></svg></span>
</article>
<article class="card" style="left:1091px;top:16px;width:515px;height:197px">
<div class="photo" style="width:128px;height:195px"><svg class="ph" width="128" height="195" viewBox="0 0 128 195" preserveAspectRatio="none"><defs><filter id="bp3" x="-10%" y="-10%" width="120%" height="120%"><feGaussianBlur stdDeviation="1.2"/></filter><clipPath id="cp3"><rect width="128" height="195"/></clipPath></defs><rect width="128" height="195" fill="#3a4654"/><g clip-path="url(#cp3)"><g filter="url(#bp3)"><defs><filter id="k3" x="-20%" y="-20%" width="140%" height="140%"><feTurbulence type="fractalNoise" baseFrequency="0.07" numOctaves="2" seed="7" result="n"/><feDisplacementMap in="SourceGraphic" in2="n" scale="8" xChannelSelector="R" yChannelSelector="G"/></filter></defs>
<rect x="-5" y="-5" width="140" height="205" fill="#3a4654"/>
<g stroke="#262d37" stroke-width="2.2" fill="none">
<path d="M-2 17H130M-2 39H130M-2 63H130M-2 86H130M-2 109H60M-2 131H40"/>
<path d="M24 -2V17M20 17V39M44 39V63M18 63V86M40 86V109M70 -2V17M100 17V39"/>
</g>
<rect x="-5" y="-5" width="140" height="12" fill="#2e3743"/>
<rect x="-5" y="40" width="40" height="22" fill="#434f5d"/>
<path d="M0 122C6 118 12 120 16 126L20 165 0 168Z" fill="#1b5a60"/>
<path d="M0 166L5 164 6 196H0Z" fill="#c99274"/>
<g filter="url(#k3)">
<path d="M84 15C70 15 60 25 56 40 48 60 40 78 30 92 20 108 14 125 10 145 6 165 4 180 3 200H135V84C130 55 122 35 110 24 102 17 93 15 84 15Z" fill="#37271f"/>
<g fill="none" stroke="#7d6044" stroke-width="3.5">
<path d="M55 48C50 70 38 92 30 112 22 135 20 160 24 192"/>
<path d="M50 100C42 125 36 150 36 185"/>
<path d="M44 70C36 90 26 105 20 125"/>
<path d="M114 118C120 140 124 165 122 192"/>
</g>
<g fill="none" stroke="#9a7a58" stroke-width="2">
<path d="M48 120C42 140 38 160 40 180"/><path d="M30 130C24 150 22 170 26 190"/><path d="M104 150C110 165 112 180 110 195"/>
</g>
</g>
<path d="M74 105L92 108 92 150 70 150Z" fill="#c6947a"/>
<ellipse cx="87.5" cy="72" rx="25" ry="38.5" fill="#e6b8a2"/>
<ellipse cx="86" cy="78" rx="16" ry="23" fill="#f3cfbe"/>
<path d="M70 60q7-3.5 14 0M94 60q7-3 13 .5" stroke="#3a2a22" stroke-width="2.4" fill="none"/>
<ellipse cx="77" cy="66" rx="4.5" ry="2" fill="#2e221e"/><ellipse cx="100" cy="66" rx="4.5" ry="2" fill="#2e221e"/>
<path d="M86 70C85 78 84 82 86 86" stroke="#d9a58f" stroke-width="2" fill="none"/>
<path d="M76 92q10 4.5 20 0" stroke="#c76e70" stroke-width="3" fill="none"/>
<path d="M36 164L62 147C70 156 84 158 92 152L104 158 100 200H28Z" fill="#10464c"/>
<path d="M60 148C70 158 84 160 93 152" stroke="#0a2c30" stroke-width="2" fill="none"/>
<g filter="url(#k3)"><path d="M96 130C104 150 106 175 100 200H135V120Z" fill="#3a2a20"/><path d="M62 100C60 120 62 138 66 152L52 156C50 135 52 115 58 100Z" fill="#37271f"/><path d="M96 104C100 120 100 140 96 156L108 160C112 140 110 118 104 104Z" fill="#37271f"/>
<path d="M40 150C36 170 36 185 38 200H20C18 185 22 165 30 150Z" fill="#3a2a20"/></g>
</g></g></svg></div>
<h3 class="t" style="left:138.8px;top:17.3px;font-size:18.4px;font-weight:700;color:#111827;letter-spacing:0.1px;">Amy Watson</h3>
<span class="i" style="left:141.4px;top:44.7px;"><svg width="18" height="15" viewBox="0 0 18 15" ><path fill="#714b67" d="M2 3h1v12H2a2 2 0 0 1-2-2V5a2 2 0 0 1 2-2z"/><path fill="#714b67" d="M15 3h1a2 2 0 0 1 2 2v8a2 2 0 0 1-2 2h-1z"/><path fill="#714b67" fill-rule="evenodd" d="M4 3h1.5V1.2A1.2 1.2 0 0 1 6.7 0h4.6a1.2 1.2 0 0 1 1.2 1.2V3H14v12H4zM7 1.4V3h4V1.4z"/></svg></span>
<span class="t" style="left:171px;top:45px;font-size:17.5px;letter-spacing:0.089px;">Interior Designer</span>
<span class="i" style="left:143.2px;top:72.1px;"><svg width="14.4" height="14.4" viewBox="0 0 1408 1408" ><path fill="#714b67" d="M1408 1112q0 27 -10 70.5t-21 68.5q-21 50 -122 106q-94 51 -186 51q-27 0 -53 -3.5t-57.5 -12.5t-47 -14.5t-55.5 -20.5t-49 -18q-98 -35 -175 -83q-127 -79 -264 -216t-216 -264q-48 -77 -83 -175q-3 -9 -18 -49t-20.5 -55.5t-14.5 -47t-12.5 -57.5t-3.5 -53q0 -92 51 -186q56 -101 106 -122q25 -11 68.5 -21t70.5 -10q14 0 21 3q18 6 53 76q11 19 30 54t35 63.5t31 53.5q3 4 17.5 25t21.5 35.5t7 28.5q0 20 -28.5 50t-62 55t-62 53t-28.5 46q0 9 5 22.5t8.5 20.5t14 24t11.5 19q76 137 174 235t235 174q2 1 19 11.5t24 14t20.5 8.5t22.5 5q18 0 46 -28.5t53 -62t55 -62t50 -28.5q14 0 28.5 7t35.5 21.5t25 17.5q25 15 53.5 31t63.5 35t54 30q70 35 76 53q3 7 3 21z"/></svg></span>
<span class="t" style="left:171px;top:71.2px;font-size:17.5px;letter-spacing:-0.072px;">(535)-495-4222</span>
<span class="tag o" style="left:139.4px;top:95.2px;width:89.4px">Employee</span>
<i class="dot" style="left:484.4px;top:17px"></i>
<span class="i" style="left:473.6px;top:157.4px;"><svg width="20" height="20" viewBox="0 0 20 20" ><circle cx="10" cy="10" r="8.8" fill="none" stroke="#47505e" stroke-width="2.4"/><path d="M10.6 5.5V11H6.8" fill="none" stroke="#47505e" stroke-width="1.7"/></svg></span>
</article>
<article class="card" style="left:20px;top:223px;width:515px;height:221px">
<div class="photo" style="width:129px;height:219px"><svg class="ph" width="129" height="219" viewBox="0 0 129 219" preserveAspectRatio="none"><defs><filter id="bp4" x="-10%" y="-10%" width="120%" height="120%"><feGaussianBlur stdDeviation="1.5"/></filter><clipPath id="cp4"><rect width="129" height="219"/></clipPath></defs><rect width="129" height="219" fill="#3b2622"/><g clip-path="url(#cp4)"><g filter="url(#bp4)">
<rect x="-5" y="-5" width="140" height="230" fill="#3b2622"/>
<path d="M-5 -5H60L32 10 9 33-5 60Z" fill="#c9a562"/>
<path d="M98 -5H135V42L118 20Z" fill="#a37a3a"/>
<path d="M57 0C80 4 105 20 118 50 128 80 130 120 128 160V200H100C112 150 108 90 90 55 80 35 65 20 50 12Z" fill="#4a302a"/>
<path d="M44 46C25 55 8 80 4 110 2 140 15 170 40 178 65 182 88 160 93 135 92 100 75 60 44 46Z" fill="#efc6b6"/>
<path d="M46 184L74 174 76 222H50Z" fill="#cf9a88"/>
<ellipse cx="36" cy="115" rx="22" ry="34" fill="#f8ddd2"/>
<ellipse cx="58" cy="128" rx="14" ry="16" fill="#f3cfc2"/>
<path d="M8 84q9-5 20-1M48 87q12-4 24 2" stroke="#4a3028" stroke-width="2.6" fill="none"/>
<ellipse cx="18" cy="91" rx="5.5" ry="2.6" fill="#2c2220"/><ellipse cx="61" cy="96" rx="6.5" ry="3" fill="#2c2220"/>
<path d="M22 104C20 112 19 116 22 121 27 124 33 123 36 119" stroke="#e5b5a7" stroke-width="2.2" fill="none"/>
<path d="M18 133C30 138 46 142 60 141 54 154 36 158 26 150 22 146 19 140 18 133Z" fill="#c7607c"/>
<path d="M23 137C33 141 45 144 56 143 50 149 34 149 27 145Z" fill="#fdf6f4"/>
<path d="M0 150C10 175 25 190 44 196V225H-5Z" fill="#3b2622"/>
<path d="M44 46C60 40 80 50 92 80 100 105 98 135 92 150 96 120 90 95 80 78 70 62 58 52 44 46Z" fill="#3b2622"/>
<path d="M0 60C4 50 16 40 30 36L44 46C24 54 8 78 4 108L-2 110Z" fill="#3b2622"/>
<path d="M80 175C95 170 110 180 120 200L128 222H80Z" fill="#4a322c"/>
<path d="M108 222L130 194V222Z" fill="#2ec4a4"/>
</g></g></svg></div>
<h3 class="t" style="left:138.8px;top:17.3px;font-size:18.4px;font-weight:700;color:#111827;letter-spacing:0.088px;">Anita Oliver</h3>
<span class="i" style="left:141.4px;top:44.7px;"><svg width="18" height="15" viewBox="0 0 18 15" ><path fill="#714b67" d="M2 3h1v12H2a2 2 0 0 1-2-2V5a2 2 0 0 1 2-2z"/><path fill="#714b67" d="M15 3h1a2 2 0 0 1 2 2v8a2 2 0 0 1-2 2h-1z"/><path fill="#714b67" fill-rule="evenodd" d="M4 3h1.5V1.2A1.2 1.2 0 0 1 6.7 0h4.6a1.2 1.2 0 0 1 1.2 1.2V3H14v12H4zM7 1.4V3h4V1.4z"/></svg></span>
<span class="t" style="left:171px;top:45px;font-size:17.5px;letter-spacing:-0.161px;">Experienced Developer</span>
<span class="i" style="left:141.4px;top:72.7px;"><svg width="18" height="13.8" viewBox="0 0 18 13" preserveAspectRatio="none"><path fill="#714b67" d="M0 4.3V11.4A1.6 1.6 0 0 0 1.6 13h14.8A1.6 1.6 0 0 0 18 11.4V4.3L10.6 9.7a2.7 2.7 0 0 1-3.2 0z"/><path fill="#714b67" d="M1.6 0A1.6 1.6 0 0 0 0 1.6v.7l8.1 6a1.5 1.5 0 0 0 1.8 0l8.1-6v-.7A1.6 1.6 0 0 0 16.4 0z"/></svg></span>
<span class="t" style="left:171px;top:72px;font-size:17.5px;letter-spacing:-0.141px;">anita.oliver32@example.com</span>
<span class="i" style="left:143.2px;top:98.4px;"><svg width="14.4" height="14.4" viewBox="0 0 1408 1408" ><path fill="#714b67" d="M1408 1112q0 27 -10 70.5t-21 68.5q-21 50 -122 106q-94 51 -186 51q-27 0 -53 -3.5t-57.5 -12.5t-47 -14.5t-55.5 -20.5t-49 -18q-98 -35 -175 -83q-127 -79 -264 -216t-216 -264q-48 -77 -83 -175q-3 -9 -18 -49t-20.5 -55.5t-14.5 -47t-12.5 -57.5t-3.5 -53q0 -92 51 -186q56 -101 106 -122q25 -11 68.5 -21t70.5 -10q14 0 21 3q18 6 53 76q11 19 30 54t35 63.5t31 53.5q3 4 17.5 25t21.5 35.5t7 28.5q0 20 -28.5 50t-62 55t-62 53t-28.5 46q0 9 5 22.5t8.5 20.5t14 24t11.5 19q76 137 174 235t235 174q2 1 19 11.5t24 14t20.5 8.5t22.5 5q18 0 46 -28.5t53 -62t55 -62t50 -28.5q14 0 28.5 7t35.5 21.5t25 17.5q25 15 53.5 31t63.5 35t54 30q70 35 76 53q3 7 3 21z"/></svg></span>
<span class="t" style="left:171px;top:97.5px;font-size:17.5px;letter-spacing:-0.072px;">(555)-497-4804</span>
<span class="i" style="left:141.4px;top:122.4px;"><svg width="18" height="15" viewBox="0 0 18 15" ><path fill="#714b67" fill-rule="evenodd" d="M6 3V1.3A1.3 1.3 0 0 1 7.3 0h3.4A1.3 1.3 0 0 1 12 1.3V3h4.4A1.6 1.6 0 0 1 18 4.6V8.3H0V4.6A1.6 1.6 0 0 1 1.6 3zM7.3 1.3V3h3.4V1.3z"/><path fill="#714b67" d="M0 9.3h7v1.1a.6.6 0 0 0 .6.6h2.8a.6.6 0 0 0 .6-.6V9.3h7v4.1A1.6 1.6 0 0 1 16.4 15H1.6A1.6 1.6 0 0 1 0 13.4z"/><rect fill="#714b67" x="8" y="9.3" width="2" height=".9"/></svg></span>
<span class="t" style="left:171px;top:123.7px;font-size:17.5px;letter-spacing:-0.828px;">Jan 1</span>
<span class="tag o" style="left:139.4px;top:147.7px;width:89.4px">Employee</span>
<span class="i" style="left:484.6px;top:15.2px;"><svg width="16" height="16" viewBox="0 0 16 16" ><g transform="rotate(45 8 8)" fill="#e99d00"><path d="M8 -1.5c.9 0 1.5 1.3 1.5 2.8V5l6.5 4.3v1.9L9.5 9.3v4.3l2 1.5v1.4L8 15.6l-3.5.9v-1.4l2-1.5V9.3L0 11.2V9.3L6.5 5V1.3C6.5-.2 7.1-1.5 8-1.5z"/></g></svg></span>
<span class="i" style="left:473.6px;top:181.4px;"><svg width="20" height="20" viewBox="0 0 20 20" ><circle cx="10" cy="10" r="8.8" fill="none" stroke="#47505e" stroke-width="2.4"/><path d="M10.6 5.5V11H6.8" fill="none" stroke="#47505e" stroke-width="1.7"/></svg></span>
</article>
<article class="card" style="left:555px;top:223px;width:516px;height:221px">
<div class="photo" style="width:129px;height:219px"><svg class="ph" width="129" height="219" viewBox="0 0 129 219" preserveAspectRatio="none"><defs><filter id="bp5" x="-10%" y="-10%" width="120%" height="120%"><feGaussianBlur stdDeviation="1.5"/></filter><clipPath id="cp5"><rect width="129" height="219"/></clipPath></defs><rect width="129" height="219" fill="#dcd3cb"/><g clip-path="url(#cp5)"><g filter="url(#bp5)"><defs><filter id="g5" x="-20%" y="-20%" width="140%" height="140%"><feGaussianBlur stdDeviation="3"/></filter></defs>
<g filter="url(#g5)"><rect x="-20" y="-20" width="170" height="270" fill="#dcd3cb"/>
<rect x="-20" y="18" width="41" height="64" fill="#c2bec6"/>
<rect x="88" y="-20" width="62" height="85" fill="#e6ded6"/>
<rect x="110" y="30" width="40" height="45" fill="#cfc6bd"/>
<path d="M38 -2L35 30M72 -2L76 28" stroke="#5e4c3c" stroke-width="3" fill="none"/>
<rect x="42" y="-20" width="28" height="43" fill="#eee9e3"/>
<rect x="-20" y="80" width="170" height="12" fill="#c9c878"/>
<rect x="-20" y="90" width="170" height="72" fill="#7e9a3a"/>
<rect x="-20" y="100" width="45" height="55" fill="#5f7f28"/>
<rect x="100" y="92" width="50" height="40" fill="#a3b354"/></g>
<path d="M62 25C42 26 30 42 26 60 18 80 11 100 9 137 12 150 18 156 24 158L44 150 88 148 114 148C120 140 121 128 120 120 116 90 112 70 96 46 88 32 76 25 62 25Z" fill="#4a3224"/>
<path d="M44 140H86L88 160 42 160Z" fill="#dfae90"/>
<ellipse cx="63.5" cy="96" rx="34" ry="48" fill="#e8b999"/>
<ellipse cx="63" cy="104" rx="22" ry="28" fill="#f1c9ad"/>
<path d="M30 62C40 50 55 46 64 46 78 46 90 54 98 66 92 40 76 30 62 30 46 30 34 44 30 62Z" fill="#4a3224"/>
<path d="M35 78q9-5 17-1M72 77q9-4 18 1" stroke="#4a3022" stroke-width="2.4" fill="none"/>
<path d="M36 86q7-3.5 14 0M73 86q7-3.5 15 0" stroke="#2a1c16" stroke-width="2.8" fill="none"/>
<path d="M56 104q7 4 14 0" stroke="#c9957a" stroke-width="2" fill="none"/>
<path d="M47 116C56 120 70 120 80 116 76 128 54 129 47 116Z" fill="#c06a5c"/>
<path d="M51 118C58 121 69 121 76 118 72 123 56 123 51 118Z" fill="#fff6f2"/>
<path d="M-5 168L28 156 45 150C55 160 72 160 85 150L102 155 135 167V225H-5Z" fill="#ece3dd"/>
<path d="M30 175V219M60 170V219M92 174V219" stroke="#dfd4cd" stroke-width="2" fill="none"/>
</g></g></svg></div>
<h3 class="t" style="left:138.8px;top:17.3px;font-size:18.4px;font-weight:700;color:#111827;letter-spacing:-0.148px;">Audrey Peterson</h3>
<span class="i" style="left:141.4px;top:44.7px;"><svg width="18" height="15" viewBox="0 0 18 15" ><path fill="#714b67" d="M2 3h1v12H2a2 2 0 0 1-2-2V5a2 2 0 0 1 2-2z"/><path fill="#714b67" d="M15 3h1a2 2 0 0 1 2 2v8a2 2 0 0 1-2 2h-1z"/><path fill="#714b67" fill-rule="evenodd" d="M4 3h1.5V1.2A1.2 1.2 0 0 1 6.7 0h4.6a1.2 1.2 0 0 1 1.2 1.2V3H14v12H4zM7 1.4V3h4V1.4z"/></svg></span>
<span class="t" style="left:171px;top:45px;font-size:17.5px;letter-spacing:0.114px;">Consultant</span>
<span class="i" style="left:141.4px;top:72.7px;"><svg width="18" height="13.8" viewBox="0 0 18 13" preserveAspectRatio="none"><path fill="#714b67" d="M0 4.3V11.4A1.6 1.6 0 0 0 1.6 13h14.8A1.6 1.6 0 0 0 18 11.4V4.3L10.6 9.7a2.7 2.7 0 0 1-3.2 0z"/><path fill="#714b67" d="M1.6 0A1.6 1.6 0 0 0 0 1.6v.7l8.1 6a1.5 1.5 0 0 0 1.8 0l8.1-6v-.7A1.6 1.6 0 0 0 16.4 0z"/></svg></span>
<span class="t" style="left:171px;top:72px;font-size:17.5px;letter-spacing:-0.107px;">audrey.peterson25@example.com</span>
<span class="i" style="left:143.2px;top:98.4px;"><svg width="14.4" height="14.4" viewBox="0 0 1408 1408" ><path fill="#714b67" d="M1408 1112q0 27 -10 70.5t-21 68.5q-21 50 -122 106q-94 51 -186 51q-27 0 -53 -3.5t-57.5 -12.5t-47 -14.5t-55.5 -20.5t-49 -18q-98 -35 -175 -83q-127 -79 -264 -216t-216 -264q-48 -77 -83 -175q-3 -9 -18 -49t-20.5 -55.5t-14.5 -47t-12.5 -57.5t-3.5 -53q0 -92 51 -186q56 -101 106 -122q25 -11 68.5 -21t70.5 -10q14 0 21 3q18 6 53 76q11 19 30 54t35 63.5t31 53.5q3 4 17.5 25t21.5 35.5t7 28.5q0 20 -28.5 50t-62 55t-62 53t-28.5 46q0 9 5 22.5t8.5 20.5t14 24t11.5 19q76 137 174 235t235 174q2 1 19 11.5t24 14t20.5 8.5t22.5 5q18 0 46 -28.5t53 -62t55 -62t50 -28.5q14 0 28.5 7t35.5 21.5t25 17.5q25 15 53.5 31t63.5 35t54 30q70 35 76 53q3 7 3 21z"/></svg></span>
<span class="t" style="left:171px;top:97.5px;font-size:17.5px;letter-spacing:-0.072px;">(555)-276-7903</span>
<span class="i" style="left:141.4px;top:122.4px;"><svg width="18" height="15" viewBox="0 0 18 15" ><path fill="#714b67" fill-rule="evenodd" d="M6 3V1.3A1.3 1.3 0 0 1 7.3 0h3.4A1.3 1.3 0 0 1 12 1.3V3h4.4A1.6 1.6 0 0 1 18 4.6V8.3H0V4.6A1.6 1.6 0 0 1 1.6 3zM7.3 1.3V3h3.4V1.3z"/><path fill="#714b67" d="M0 9.3h7v1.1a.6.6 0 0 0 .6.6h2.8a.6.6 0 0 0 .6-.6V9.3h7v4.1A1.6 1.6 0 0 1 16.4 15H1.6A1.6 1.6 0 0 1 0 13.4z"/><rect fill="#714b67" x="8" y="9.3" width="2" height=".9"/></svg></span>
<span class="t" style="left:171px;top:123.7px;font-size:17.5px;letter-spacing:-0.828px;">Jan 1</span>
<span class="tag o" style="left:139.4px;top:147.7px;width:89.4px">Employee</span>
<span class="tag b" style="left:234.3px;top:147.7px;width:97.6px">Consultant</span>
<i class="dot" style="left:484.4px;top:17px"></i>
<span class="i" style="left:473.6px;top:181.4px;"><svg width="20" height="20" viewBox="0 0 20 20" ><circle cx="10" cy="10" r="8.8" fill="none" stroke="#47505e" stroke-width="2.4"/><path d="M10.6 5.5V11H6.8" fill="none" stroke="#47505e" stroke-width="1.7"/></svg></span>
</article>
<article class="card" style="left:1091px;top:223px;width:515px;height:221px">
<div class="photo" style="width:128px;height:219px;background:#2bb99a"><span class="ini" style="width:128px;top:53px;font-size:115.7px;line-height:1">B</span></div>
<h3 class="t" style="left:138.8px;top:17.3px;font-size:18.4px;font-weight:700;color:#111827;letter-spacing:-0.05px;">Barty McBly</h3>
<span class="i" style="left:141.4px;top:44.7px;"><svg width="18" height="15" viewBox="0 0 18 15" ><path fill="#714b67" d="M2 3h1v12H2a2 2 0 0 1-2-2V5a2 2 0 0 1 2-2z"/><path fill="#714b67" d="M15 3h1a2 2 0 0 1 2 2v8a2 2 0 0 1-2 2h-1z"/><path fill="#714b67" fill-rule="evenodd" d="M4 3h1.5V1.2A1.2 1.2 0 0 1 6.7 0h4.6a1.2 1.2 0 0 1 1.2 1.2V3H14v12H4zM7 1.4V3h4V1.4z"/></svg></span>
<span class="t" style="left:171px;top:45px;font-size:17.5px;letter-spacing:0.059px;">Consultant</span>
<span class="i" style="left:141.4px;top:72.7px;"><svg width="18" height="13.8" viewBox="0 0 18 13" preserveAspectRatio="none"><path fill="#714b67" d="M0 4.3V11.4A1.6 1.6 0 0 0 1.6 13h14.8A1.6 1.6 0 0 0 18 11.4V4.3L10.6 9.7a2.7 2.7 0 0 1-3.2 0z"/><path fill="#714b67" d="M1.6 0A1.6 1.6 0 0 0 0 1.6v.7l8.1 6a1.5 1.5 0 0 0 1.8 0l8.1-6v-.7A1.6 1.6 0 0 0 16.4 0z"/></svg></span>
<span class="t" style="left:171px;top:72px;font-size:17.5px;letter-spacing:-0.045px;">barty.mcbly@example.com</span>
<span class="i" style="left:143.2px;top:98.4px;"><svg width="14.4" height="14.4" viewBox="0 0 1408 1408" ><path fill="#714b67" d="M1408 1112q0 27 -10 70.5t-21 68.5q-21 50 -122 106q-94 51 -186 51q-27 0 -53 -3.5t-57.5 -12.5t-47 -14.5t-55.5 -20.5t-49 -18q-98 -35 -175 -83q-127 -79 -264 -216t-216 -264q-48 -77 -83 -175q-3 -9 -18 -49t-20.5 -55.5t-14.5 -47t-12.5 -57.5t-3.5 -53q0 -92 51 -186q56 -101 106 -122q25 -11 68.5 -21t70.5 -10q14 0 21 3q18 6 53 76q11 19 30 54t35 63.5t31 53.5q3 4 17.5 25t21.5 35.5t7 28.5q0 20 -28.5 50t-62 55t-62 53t-28.5 46q0 9 5 22.5t8.5 20.5t14 24t11.5 19q76 137 174 235t235 174q2 1 19 11.5t24 14t20.5 8.5t22.5 5q18 0 46 -28.5t53 -62t55 -62t50 -28.5q14 0 28.5 7t35.5 21.5t25 17.5q25 15 53.5 31t63.5 35t54 30q70 35 76 53q3 7 3 21z"/></svg></span>
<span class="t" style="left:171px;top:97.5px;font-size:17.5px;letter-spacing:-0.072px;">(555)-234-3424</span>
<span class="i" style="left:141.4px;top:122.4px;"><svg width="18" height="15" viewBox="0 0 18 15" ><path fill="#714b67" fill-rule="evenodd" d="M6 3V1.3A1.3 1.3 0 0 1 7.3 0h3.4A1.3 1.3 0 0 1 12 1.3V3h4.4A1.6 1.6 0 0 1 18 4.6V8.3H0V4.6A1.6 1.6 0 0 1 1.6 3zM7.3 1.3V3h3.4V1.3z"/><path fill="#714b67" d="M0 9.3h7v1.1a.6.6 0 0 0 .6.6h2.8a.6.6 0 0 0 .6-.6V9.3h7v4.1A1.6 1.6 0 0 1 16.4 15H1.6A1.6 1.6 0 0 1 0 13.4z"/><rect fill="#714b67" x="8" y="9.3" width="2" height=".9"/></svg></span>
<span class="t" style="left:171px;top:123.7px;font-size:17.5px;letter-spacing:-0.22px;">Oct 21, 2015</span>
<i class="dot" style="left:484.4px;top:17px"></i>
<span class="i" style="left:473.6px;top:181.4px;"><svg width="20" height="20" viewBox="0 0 20 20" ><circle cx="10" cy="10" r="8.8" fill="none" stroke="#47505e" stroke-width="2.4"/><path d="M10.6 5.5V11H6.8" fill="none" stroke="#47505e" stroke-width="1.7"/></svg></span>
</article>
<article class="card" style="left:20px;top:454px;width:515px;height:197px">
<div class="photo" style="width:129px;height:195px"><svg class="ph" width="129" height="195" viewBox="0 0 129 195" preserveAspectRatio="none"><defs><filter id="bp7" x="-10%" y="-10%" width="120%" height="120%"><feGaussianBlur stdDeviation="1.2"/></filter><clipPath id="cp7"><rect width="129" height="195"/></clipPath></defs><rect width="129" height="195" fill="#f3e8ea"/><g clip-path="url(#cp7)"><g filter="url(#bp7)"><defs><filter id="k7" x="-20%" y="-20%" width="140%" height="140%"><feTurbulence type="fractalNoise" baseFrequency="0.1" numOctaves="2" seed="2" result="n"/><feDisplacementMap in="SourceGraphic" in2="n" scale="4" xChannelSelector="R" yChannelSelector="G"/></filter></defs>
<rect x="-5" y="-5" width="140" height="205" fill="#f3e8ea"/>
<rect x="90" y="-5" width="45" height="205" fill="#f1e6ea"/>
<path d="M0 70C10 66 20 72 28 84L34 110 10 120 0 100Z" fill="#f8f0f0"/>
<path d="M0 120C30 110 50 125 64 140 80 128 100 126 129 134V200H0Z" fill="#f7efee"/>
<ellipse cx="63" cy="104" rx="27.5" ry="37" fill="#f4dcd6" transform="rotate(-8 63 104)"/>
<ellipse cx="60" cy="112" rx="15" ry="18" fill="#f9e8e3"/>
<g filter="url(#k7)">
<path d="M62 37C40 37 24 50 21 68 22 80 26 88 32 92 34 84 38 80 44 78 52 74 60 73 68 72 76 72 84 74 88 78 89 86 90 92 92 97 98 90 102 80 103 70 100 50 84 37 62 37Z" fill="#15141a"/>
</g>
<path d="M36 90q7-4 14-2M62 86q8-4 15-1" stroke="#3a2c2c" stroke-width="1.8" fill="none"/>
<ellipse cx="43.5" cy="97.5" rx="4.5" ry="2.4" fill="#1e1a1c"/><ellipse cx="70" cy="94" rx="5" ry="2.6" fill="#1e1a1c"/>
<ellipse cx="56" cy="110" rx="3" ry="2" fill="#e6c2bc"/>
<ellipse cx="62" cy="124.5" rx="6" ry="2.8" fill="#cf7b84"/>
<ellipse cx="62" cy="124.5" rx="3.5" ry="1.2" fill="#7a3a40"/>
<path d="M56 142l8 4 8-6" stroke="#5a5054" stroke-width="1.8" fill="none"/>
<circle cx="90" cy="122" r="2" fill="#3a3236"/><circle cx="28" cy="152" r="1.5" fill="#5a5054"/><circle cx="8" cy="98" r="1.3" fill="#6a6064"/>
<path d="M64 140C80 150 90 170 88 195M40 140C30 160 34 180 40 195" stroke="#eadfe0" stroke-width="2" fill="none"/>
</g></g></svg></div>
<h3 class="t" style="left:138.8px;top:17.3px;font-size:18.4px;font-weight:700;color:#111827;letter-spacing:-0.597px;">Beth Evans</h3>
<span class="i" style="left:141.4px;top:44.7px;"><svg width="18" height="15" viewBox="0 0 18 15" ><path fill="#714b67" d="M2 3h1v12H2a2 2 0 0 1-2-2V5a2 2 0 0 1 2-2z"/><path fill="#714b67" d="M15 3h1a2 2 0 0 1 2 2v8a2 2 0 0 1-2 2h-1z"/><path fill="#714b67" fill-rule="evenodd" d="M4 3h1.5V1.2A1.2 1.2 0 0 1 6.7 0h4.6a1.2 1.2 0 0 1 1.2 1.2V3H14v12H4zM7 1.4V3h4V1.4z"/></svg></span>
<span class="t" style="left:171px;top:45px;font-size:17.5px;letter-spacing:-0.206px;">Experienced Developer</span>
<span class="i" style="left:141.4px;top:71.9px;"><svg width="18" height="13.8" viewBox="0 0 18 13" preserveAspectRatio="none"><path fill="#714b67" d="M0 4.3V11.4A1.6 1.6 0 0 0 1.6 13h14.8A1.6 1.6 0 0 0 18 11.4V4.3L10.6 9.7a2.7 2.7 0 0 1-3.2 0z"/><path fill="#714b67" d="M1.6 0A1.6 1.6 0 0 0 0 1.6v.7l8.1 6a1.5 1.5 0 0 0 1.8 0l8.1-6v-.7A1.6 1.6 0 0 0 16.4 0z"/></svg></span>
<span class="t" style="left:171px;top:71.2px;font-size:17.5px;letter-spacing:-0.257px;">beth.evans77@example.com</span>
<span class="i" style="left:143.2px;top:98.4px;"><svg width="14.4" height="14.4" viewBox="0 0 1408 1408" ><path fill="#714b67" d="M1408 1112q0 27 -10 70.5t-21 68.5q-21 50 -122 106q-94 51 -186 51q-27 0 -53 -3.5t-57.5 -12.5t-47 -14.5t-55.5 -20.5t-49 -18q-98 -35 -175 -83q-127 -79 -264 -216t-216 -264q-48 -77 -83 -175q-3 -9 -18 -49t-20.5 -55.5t-14.5 -47t-12.5 -57.5t-3.5 -53q0 -92 51 -186q56 -101 106 -122q25 -11 68.5 -21t70.5 -10q14 0 21 3q18 6 53 76q11 19 30 54t35 63.5t31 53.5q3 4 17.5 25t21.5 35.5t7 28.5q0 20 -28.5 50t-62 55t-62 53t-28.5 46q0 9 5 22.5t8.5 20.5t14 24t11.5 19q76 137 174 235t235 174q2 1 19 11.5t24 14t20.5 8.5t22.5 5q18 0 46 -28.5t53 -62t55 -62t50 -28.5q14 0 28.5 7t35.5 21.5t25 17.5q25 15 53.5 31t63.5 35t54 30q70 35 76 53q3 7 3 21z"/></svg></span>
<span class="t" style="left:171px;top:97.5px;font-size:17.5px;letter-spacing:-0.134px;">(555)-532-3841</span>
<span class="i" style="left:141.4px;top:122.4px;"><svg width="18" height="15" viewBox="0 0 18 15" ><path fill="#714b67" fill-rule="evenodd" d="M6 3V1.3A1.3 1.3 0 0 1 7.3 0h3.4A1.3 1.3 0 0 1 12 1.3V3h4.4A1.6 1.6 0 0 1 18 4.6V8.3H0V4.6A1.6 1.6 0 0 1 1.6 3zM7.3 1.3V3h3.4V1.3z"/><path fill="#714b67" d="M0 9.3h7v1.1a.6.6 0 0 0 .6.6h2.8a.6.6 0 0 0 .6-.6V9.3h7v4.1A1.6 1.6 0 0 1 16.4 15H1.6A1.6 1.6 0 0 1 0 13.4z"/><rect fill="#714b67" x="8" y="9.3" width="2" height=".9"/></svg></span>
<span class="t" style="left:171px;top:123.7px;font-size:17.5px;letter-spacing:-1.078px;">Jan 1</span>
<i class="dot" style="left:484.4px;top:17px"></i>
<span class="i" style="left:473.6px;top:157.4px;"><svg width="20" height="20" viewBox="0 0 20 20" ><circle cx="10" cy="10" r="8.8" fill="none" stroke="#47505e" stroke-width="2.4"/><path d="M10.6 5.5V11H6.8" fill="none" stroke="#47505e" stroke-width="1.7"/></svg></span>
</article>
<article class="card" style="left:555px;top:454px;width:516px;height:197px">
<div class="photo" style="width:129px;height:195px;background:#4163a8"><span class="ini" style="width:129px;top:47.1px;font-size:103.1px;line-height:1">B</span></div>
<h3 class="t" style="left:138.8px;top:17.3px;font-size:18.4px;font-weight:700;color:#111827;letter-spacing:-0.455px;">Billy Kyle</h3>
<span class="i" style="left:141.4px;top:44.7px;"><svg width="18" height="15" viewBox="0 0 18 15" ><path fill="#714b67" d="M2 3h1v12H2a2 2 0 0 1-2-2V5a2 2 0 0 1 2-2z"/><path fill="#714b67" d="M15 3h1a2 2 0 0 1 2 2v8a2 2 0 0 1-2 2h-1z"/><path fill="#714b67" fill-rule="evenodd" d="M4 3h1.5V1.2A1.2 1.2 0 0 1 6.7 0h4.6a1.2 1.2 0 0 1 1.2 1.2V3H14v12H4zM7 1.4V3h4V1.4z"/></svg></span>
<span class="t" style="left:171px;top:45px;font-size:17.5px;letter-spacing:-0.206px;">Experienced Developer</span>
<span class="i" style="left:141.4px;top:71.9px;"><svg width="18" height="13.8" viewBox="0 0 18 13" preserveAspectRatio="none"><path fill="#714b67" d="M0 4.3V11.4A1.6 1.6 0 0 0 1.6 13h14.8A1.6 1.6 0 0 0 18 11.4V4.3L10.6 9.7a2.7 2.7 0 0 1-3.2 0z"/><path fill="#714b67" d="M1.6 0A1.6 1.6 0 0 0 0 1.6v.7l8.1 6a1.5 1.5 0 0 0 1.8 0l8.1-6v-.7A1.6 1.6 0 0 0 16.4 0z"/></svg></span>
<span class="t" style="left:171px;top:71.2px;font-size:17.5px;letter-spacing:0.123px;">info@yourcompany.com</span>
<span class="i" style="left:143.2px;top:98.4px;"><svg width="14.4" height="14.4" viewBox="0 0 1408 1408" ><path fill="#714b67" d="M1408 1112q0 27 -10 70.5t-21 68.5q-21 50 -122 106q-94 51 -186 51q-27 0 -53 -3.5t-57.5 -12.5t-47 -14.5t-55.5 -20.5t-49 -18q-98 -35 -175 -83q-127 -79 -264 -216t-216 -264q-48 -77 -83 -175q-3 -9 -18 -49t-20.5 -55.5t-14.5 -47t-12.5 -57.5t-3.5 -53q0 -92 51 -186q56 -101 106 -122q25 -11 68.5 -21t70.5 -10q14 0 21 3q18 6 53 76q11 19 30 54t35 63.5t31 53.5q3 4 17.5 25t21.5 35.5t7 28.5q0 20 -28.5 50t-62 55t-62 53t-28.5 46q0 9 5 22.5t8.5 20.5t14 24t11.5 19q76 137 174 235t235 174q2 1 19 11.5t24 14t20.5 8.5t22.5 5q18 0 46 -28.5t53 -62t55 -62t50 -28.5q14 0 28.5 7t35.5 21.5t25 17.5q25 15 53.5 31t63.5 35t54 30q70 35 76 53q3 7 3 21z"/></svg></span>
<span class="t" style="left:171px;top:97.5px;font-size:17.5px;letter-spacing:0.115px;">+1 555-555-5556</span>
<span class="i" style="left:141.4px;top:122.4px;"><svg width="18" height="15" viewBox="0 0 18 15" ><path fill="#714b67" fill-rule="evenodd" d="M6 3V1.3A1.3 1.3 0 0 1 7.3 0h3.4A1.3 1.3 0 0 1 12 1.3V3h4.4A1.6 1.6 0 0 1 18 4.6V8.3H0V4.6A1.6 1.6 0 0 1 1.6 3zM7.3 1.3V3h3.4V1.3z"/><path fill="#714b67" d="M0 9.3h7v1.1a.6.6 0 0 0 .6.6h2.8a.6.6 0 0 0 .6-.6V9.3h7v4.1A1.6 1.6 0 0 1 16.4 15H1.6A1.6 1.6 0 0 1 0 13.4z"/><rect fill="#714b67" x="8" y="9.3" width="2" height=".9"/></svg></span>
<span class="t" style="left:171px;top:123.7px;font-size:17.5px;letter-spacing:-0.589px;">Jan 22</span>
<i class="dot" style="left:484.4px;top:17px"></i>
<span class="i" style="left:473.6px;top:157.4px;"><svg width="20" height="20" viewBox="0 0 20 20" ><circle cx="10" cy="10" r="8.8" fill="none" stroke="#47505e" stroke-width="2.4"/><path d="M10.6 5.5V11H6.8" fill="none" stroke="#47505e" stroke-width="1.7"/></svg></span>
</article>
<article class="card" style="left:1091px;top:454px;width:515px;height:197px">
<div class="photo" style="width:128px;height:195px"><svg class="ph" width="128" height="195" viewBox="0 0 128 195" preserveAspectRatio="none"><defs><filter id="bp9" x="-10%" y="-10%" width="120%" height="120%"><feGaussianBlur stdDeviation="1.3"/></filter><clipPath id="cp9"><rect width="128" height="195"/></clipPath></defs><rect width="128" height="195" fill="#6ea6c6"/><g clip-path="url(#cp9)"><g filter="url(#bp9)">
<rect x="-5" y="-5" width="140" height="205" fill="#6ea6c6"/>
<defs><linearGradient id="cg9" x1="0" y1="0" x2="1" y2="0"><stop offset="0" stop-color="#74abc9"/><stop offset="1" stop-color="#5f9bbf"/></linearGradient></defs><rect x="-5" y="-5" width="140" height="160" fill="url(#cg9)"/>
<rect x="-5" y="150" width="140" height="50" fill="#eef0f3"/>
<path d="M0 74L17 67 46 69 62 74 76 119 56 124 55 150 0 143Z" fill="#181b22"/>
<path d="M17 69L44 76 53 136 23 140Z" fill="#e9e9ef"/>
<path d="M30 84L37 84 43 148 33 149Z" fill="#a9c9ea"/>
<path d="M17 67L30 84 22 92 12 72ZM46 69L38 86 48 96 54 74Z" fill="#181b22"/>
<ellipse cx="36" cy="55" rx="15.5" ry="21" fill="#e1b9a2"/>
<path d="M15 44C14 30 24 23 36 23 50 22 58 30 58 42 58 50 55 54 53 58 52 48 48 40 40 38 30 36 24 42 21 50L19 58C16 54 15 50 15 44Z" fill="#4a3428"/>
<path d="M26 52q4-2 8 0M42 52q4-2 8 0" stroke="#3a2a22" stroke-width="1.6" fill="none"/>
<path d="M33 67q4 1.5 8 0" stroke="#b47066" stroke-width="1.5" fill="none"/>
<path d="M3 138C10 132 22 132 32 138L30 152 6 156Z" fill="#e3b59c"/>
<path d="M28 118L31 140" stroke="#8a8a90" stroke-width="1.5"/>
<path d="M56 124L121.5 120 119 162 55 171Z" fill="#c5c5c8"/>
<path d="M37 160L55 158 55 171 46 170Z" fill="#9a9a9f"/>
<path d="M12 153H34L32 166C26 170 18 170 14 166Z" fill="#f5f5f6"/>
<path d="M120 104L128 96V114Z" fill="#1a1c22"/><rect x="126" y="144" width="4" height="26" fill="#22242a"/>
<path d="M119 156L129 152V160L121 162Z" fill="#fafafa"/>
</g></g></svg></div>
<h3 class="t" style="left:138.8px;top:17.3px;font-size:18.4px;font-weight:700;color:#111827;letter-spacing:-0.052px;">Cherry Nelson</h3>
<span class="i" style="left:141.4px;top:44.7px;"><svg width="18" height="15" viewBox="0 0 18 15" ><path fill="#714b67" d="M2 3h1v12H2a2 2 0 0 1-2-2V5a2 2 0 0 1 2-2z"/><path fill="#714b67" d="M15 3h1a2 2 0 0 1 2 2v8a2 2 0 0 1-2 2h-1z"/><path fill="#714b67" fill-rule="evenodd" d="M4 3h1.5V1.2A1.2 1.2 0 0 1 6.7 0h4.6a1.2 1.2 0 0 1 1.2 1.2V3H14v12H4zM7 1.4V3h4V1.4z"/></svg></span>
<span class="t" style="left:171px;top:45px;font-size:17.5px;letter-spacing:-0.107px;">Maintenance Technician</span>
<span class="i" style="left:143.2px;top:72.2px;"><svg width="14.4" height="14.4" viewBox="0 0 1408 1408" ><path fill="#714b67" d="M1408 1112q0 27 -10 70.5t-21 68.5q-21 50 -122 106q-94 51 -186 51q-27 0 -53 -3.5t-57.5 -12.5t-47 -14.5t-55.5 -20.5t-49 -18q-98 -35 -175 -83q-127 -79 -264 -216t-216 -264q-48 -77 -83 -175q-3 -9 -18 -49t-20.5 -55.5t-14.5 -47t-12.5 -57.5t-3.5 -53q0 -92 51 -186q56 -101 106 -122q25 -11 68.5 -21t70.5 -10q14 0 21 3q18 6 53 76q11 19 30 54t35 63.5t31 53.5q3 4 17.5 25t21.5 35.5t7 28.5q0 20 -28.5 50t-62 55t-62 53t-28.5 46q0 9 5 22.5t8.5 20.5t14 24t11.5 19q76 137 174 235t235 174q2 1 19 11.5t24 14t20.5 8.5t22.5 5q18 0 46 -28.5t53 -62t55 -62t50 -28.5q14 0 28.5 7t35.5 21.5t25 17.5q25 15 53.5 31t63.5 35t54 30q70 35 76 53q3 7 3 21z"/></svg></span>
<span class="t" style="left:171px;top:71.2px;font-size:17.5px;letter-spacing:-0.125px;">+3281813700</span>
<span class="tag o" style="left:139.4px;top:95.2px;width:89.4px">Employee</span>
<i class="dot" style="left:484.4px;top:17px"></i>
<span class="i" style="left:473.6px;top:157.4px;"><svg width="20" height="20" viewBox="0 0 20 20" ><circle cx="10" cy="10" r="8.8" fill="none" stroke="#47505e" stroke-width="2.4"/><path d="M10.6 5.5V11H6.8" fill="none" stroke="#47505e" stroke-width="1.7"/></svg></span>
</article>
<article class="card" style="left:20px;top:661px;width:515px;height:197px">
<div class="photo" style="width:129px;height:195px"><svg class="ph" width="129" height="195" viewBox="0 0 129 195" preserveAspectRatio="none"><defs><filter id="bp10" x="-10%" y="-10%" width="120%" height="120%"><feGaussianBlur stdDeviation="1.2"/></filter><clipPath id="cp10"><rect width="129" height="195"/></clipPath></defs><rect width="129" height="195" fill="#e3e3e3"/><g clip-path="url(#cp10)"><g filter="url(#bp10)">
<rect x="-5" y="-5" width="140" height="205" fill="#e3e3e3"/>
<path d="M0 36C6 24 24 12 48 8 62 6 76 6 86 8 104 14 120 26 135 44V60L119 59 100 82 89 93 65 101 48 118 44 200H9L7 90 9 68C4 64 1 60 0 57Z" fill="#1d1d1d"/>
<path d="M119 59L135 52V200H46L52 112 65 101 89 93 100 82Z" fill="#ededed"/>
<path d="M89 41L92 43C80 60 66 78 52 92 44 104 38 112 35 120L25 120C28 108 34 96 42 86 52 72 70 56 89 41Z" fill="#8c8c8c"/>
<path d="M52 70C46 80 40 92 36 104" stroke="#b5b5b5" stroke-width="3" fill="none"/>
<path d="M100 82C108 76 114 68 119 59 122 66 118 76 108 84Z" fill="#1d1d1d"/>
<path d="M65 101C75 98 92 98 103 102M103 102L100 120M66 102L68 120M108 102C114 98 124 97 131 99" stroke="#2a2a2a" stroke-width="2" fill="none"/>
<ellipse cx="81" cy="99.5" rx="5" ry="2.6" fill="#222"/><ellipse cx="121" cy="101" rx="5" ry="2.8" fill="#222"/>
<path d="M72 94q10-3 20 1M112 94q8-3 17 1" stroke="#555" stroke-width="1.5" fill="none"/>
</g></g></svg></div>
<h3 class="t" style="left:138.8px;top:17.3px;font-size:18.4px;font-weight:700;color:#111827;letter-spacing:-0.22px;">Doris Cole</h3>
<span class="i" style="left:141.4px;top:44.7px;"><svg width="18" height="15" viewBox="0 0 18 15" ><path fill="#714b67" d="M2 3h1v12H2a2 2 0 0 1-2-2V5a2 2 0 0 1 2-2z"/><path fill="#714b67" d="M15 3h1a2 2 0 0 1 2 2v8a2 2 0 0 1-2 2h-1z"/><path fill="#714b67" fill-rule="evenodd" d="M4 3h1.5V1.2A1.2 1.2 0 0 1 6.7 0h4.6a1.2 1.2 0 0 1 1.2 1.2V3H14v12H4zM7 1.4V3h4V1.4z"/></svg></span>
<span class="t" style="left:171px;top:45px;font-size:17.5px;letter-spacing:0.014px;">Consultant</span>
<span class="i" style="left:141.4px;top:72.6px;"><svg width="18" height="13.8" viewBox="0 0 18 13" preserveAspectRatio="none"><path fill="#714b67" d="M0 4.3V11.4A1.6 1.6 0 0 0 1.6 13h14.8A1.6 1.6 0 0 0 18 11.4V4.3L10.6 9.7a2.7 2.7 0 0 1-3.2 0z"/><path fill="#714b67" d="M1.6 0A1.6 1.6 0 0 0 0 1.6v.7l8.1 6a1.5 1.5 0 0 0 1.8 0l8.1-6v-.7A1.6 1.6 0 0 0 16.4 0z"/></svg></span>
<span class="t" style="left:171px;top:72px;font-size:17.5px;letter-spacing:-0.191px;">doris.cole31@example.com</span>
<span class="i" style="left:143.2px;top:98.4px;"><svg width="14.4" height="14.4" viewBox="0 0 1408 1408" ><path fill="#714b67" d="M1408 1112q0 27 -10 70.5t-21 68.5q-21 50 -122 106q-94 51 -186 51q-27 0 -53 -3.5t-57.5 -12.5t-47 -14.5t-55.5 -20.5t-49 -18q-98 -35 -175 -83q-127 -79 -264 -216t-216 -264q-48 -77 -83 -175q-3 -9 -18 -49t-20.5 -55.5t-14.5 -47t-12.5 -57.5t-3.5 -53q0 -92 51 -186q56 -101 106 -122q25 -11 68.5 -21t70.5 -10q14 0 21 3q18 6 53 76q11 19 30 54t35 63.5t31 53.5q3 4 17.5 25t21.5 35.5t7 28.5q0 20 -28.5 50t-62 55t-62 53t-28.5 46q0 9 5 22.5t8.5 20.5t14 24t11.5 19q76 137 174 235t235 174q2 1 19 11.5t24 14t20.5 8.5t22.5 5q18 0 46 -28.5t53 -62t55 -62t50 -28.5q14 0 28.5 7t35.5 21.5t25 17.5q25 15 53.5 31t63.5 35t54 30q70 35 76 53q3 7 3 21z"/></svg></span>
<span class="t" style="left:171px;top:97.5px;font-size:17.5px;letter-spacing:-0.08px;">(555)-331-5378</span>
<i class="dot" style="left:484.4px;top:17px"></i>
<span class="i" style="left:473.6px;top:157.4px;"><svg width="20" height="20" viewBox="0 0 20 20" ><circle cx="10" cy="10" r="8.8" fill="none" stroke="#47505e" stroke-width="2.4"/><path d="M10.6 5.5V11H6.8" fill="none" stroke="#47505e" stroke-width="1.7"/></svg></span>
</article>
<article class="card" style="left:555px;top:661px;width:516px;height:197px">
<div class="photo" style="width:129px;height:195px"><svg class="ph" width="129" height="195" viewBox="0 0 129 195" preserveAspectRatio="none"><defs><filter id="bp11" x="-10%" y="-10%" width="120%" height="120%"><feGaussianBlur stdDeviation="1.3"/></filter><clipPath id="cp11"><rect width="129" height="195"/></clipPath></defs><rect width="129" height="195" fill="#6b625d"/><g clip-path="url(#cp11)"><g filter="url(#bp11)">
<rect x="-5" y="-5" width="140" height="205" fill="#6b625d"/>
<rect x="-5" y="-5" width="45" height="30" fill="#59514d"/>
<path d="M38 30C40 24 50 20 62 22 80 22 100 28 108 48L116 82 118 125 100 200H40L38 110Z" fill="#e6bea0"/>
<ellipse cx="62" cy="92" rx="16" ry="22" fill="#f3d6c0"/>
<path d="M55 -2L135 -2V76L120 80 115 60 108 46 100 32 80 26 62 22 50 24 40 30 36 20 44 8Z" fill="#6f5c3a"/>
<path d="M100 32L135 20V76L116 80 109 48Z" fill="#4c3a28"/>
<path d="M44 8C60 2 80 0 100 4 90 10 70 12 56 16 48 18 42 24 38 28L36 20Z" fill="#8f7a4c"/>
<path d="M70 14C84 12 100 16 112 24" stroke="#9a8555" stroke-width="3" fill="none"/><path d="M60 4C72 2 90 4 104 10M50 20C60 14 74 14 86 18M96 6C108 10 118 18 124 28" stroke="#4e3e28" stroke-width="2.5" fill="none"/><path d="M48 12C58 8 70 8 80 10M88 22C96 24 102 28 106 34" stroke="#a89060" stroke-width="2" fill="none"/>
<path d="M37 62L55 68M69 65L97 65" stroke="#4a3020" stroke-width="3.4" fill="none"/>
<ellipse cx="47" cy="73.5" rx="5" ry="3" fill="#2c1c16"/><ellipse cx="85" cy="76.5" rx="6" ry="3.4" fill="#2c1c16"/>
<circle cx="45" cy="73" r="1.3" fill="#fff"/><circle cx="83" cy="76" r="1.3" fill="#fff"/>
<path d="M120 78C128 74 132 80 130 90 128 98 124 102 120 100Z" fill="#e0b090"/>
<path d="M40 104C60 100 90 102 112 108L104 200H44Z" fill="#c79a7c"/>
<path d="M48 112C58 109 68 110 76 113 70 120 54 120 48 112Z" fill="#c0605a"/>
<path d="M50 96C52 104 58 108 64 106" stroke="#d2a58a" stroke-width="2" fill="none"/>
</g></g></svg></div>
<h3 class="t" style="left:138.8px;top:17.3px;font-size:18.4px;font-weight:700;color:#111827;letter-spacing:-0.086px;">Eli Lambert</h3>
<span class="i" style="left:141.4px;top:44.7px;"><svg width="18" height="15" viewBox="0 0 18 15" ><path fill="#714b67" d="M2 3h1v12H2a2 2 0 0 1-2-2V5a2 2 0 0 1 2-2z"/><path fill="#714b67" d="M15 3h1a2 2 0 0 1 2 2v8a2 2 0 0 1-2 2h-1z"/><path fill="#714b67" fill-rule="evenodd" d="M4 3h1.5V1.2A1.2 1.2 0 0 1 6.7 0h4.6a1.2 1.2 0 0 1 1.2 1.2V3H14v12H4zM7 1.4V3h4V1.4z"/></svg></span>
<span class="t" style="left:171px;top:45px;font-size:17.5px;letter-spacing:0.12px;">Marketing and Community Manager</span>
<span class="i" style="left:141.4px;top:72.6px;"><svg width="18" height="13.8" viewBox="0 0 18 13" preserveAspectRatio="none"><path fill="#714b67" d="M0 4.3V11.4A1.6 1.6 0 0 0 1.6 13h14.8A1.6 1.6 0 0 0 18 11.4V4.3L10.6 9.7a2.7 2.7 0 0 1-3.2 0z"/><path fill="#714b67" d="M1.6 0A1.6 1.6 0 0 0 0 1.6v.7l8.1 6a1.5 1.5 0 0 0 1.8 0l8.1-6v-.7A1.6 1.6 0 0 0 16.4 0z"/></svg></span>
<span class="t" style="left:171px;top:72px;font-size:17.5px;letter-spacing:-0.122px;">eli.lambert22@example.com</span>
<span class="i" style="left:143.2px;top:98.4px;"><svg width="14.4" height="14.4" viewBox="0 0 1408 1408" ><path fill="#714b67" d="M1408 1112q0 27 -10 70.5t-21 68.5q-21 50 -122 106q-94 51 -186 51q-27 0 -53 -3.5t-57.5 -12.5t-47 -14.5t-55.5 -20.5t-49 -18q-98 -35 -175 -83q-127 -79 -264 -216t-216 -264q-48 -77 -83 -175q-3 -9 -18 -49t-20.5 -55.5t-14.5 -47t-12.5 -57.5t-3.5 -53q0 -92 51 -186q56 -101 106 -122q25 -11 68.5 -21t70.5 -10q14 0 21 3q18 6 53 76q11 19 30 54t35 63.5t31 53.5q3 4 17.5 25t21.5 35.5t7 28.5q0 20 -28.5 50t-62 55t-62 53t-28.5 46q0 9 5 22.5t8.5 20.5t14 24t11.5 19q76 137 174 235t235 174q2 1 19 11.5t24 14t20.5 8.5t22.5 5q18 0 46 -28.5t53 -62t55 -62t50 -28.5q14 0 28.5 7t35.5 21.5t25 17.5q25 15 53.5 31t63.5 35t54 30q70 35 76 53q3 7 3 21z"/></svg></span>
<span class="t" style="left:171px;top:97.5px;font-size:17.5px;letter-spacing:-0.111px;">(555)-169-1352</span>
<i class="dot" style="left:484.4px;top:17px"></i>
<span class="i" style="left:473.6px;top:157.4px;"><svg width="20" height="20" viewBox="0 0 20 20" ><circle cx="10" cy="10" r="8.8" fill="none" stroke="#47505e" stroke-width="2.4"/><path d="M10.6 5.5V11H6.8" fill="none" stroke="#47505e" stroke-width="1.7"/></svg></span>
</article>
<article class="card" style="left:1091px;top:661px;width:515px;height:197px">
<div class="photo" style="width:128px;height:195px"><svg class="ph" width="128" height="195" viewBox="0 0 128 195" preserveAspectRatio="none"><defs><filter id="bp12" x="-10%" y="-10%" width="120%" height="120%"><feGaussianBlur stdDeviation="1.3"/></filter><clipPath id="cp12"><rect width="128" height="195"/></clipPath></defs><rect width="128" height="195" fill="#d9be8a"/><g clip-path="url(#cp12)"><g filter="url(#bp12)"><defs><filter id="g12" x="-20%" y="-20%" width="140%" height="140%"><feGaussianBlur stdDeviation="2.6"/></filter></defs>
<g filter="url(#g12)"><rect x="-20" y="-20" width="170" height="270" fill="#d9be8a"/>
<rect x="-20" y="24" width="170" height="17" fill="#ead7ab"/>
<rect x="-20" y="2" width="32" height="21" fill="#5c5c5c"/>
<rect x="80" y="2" width="70" height="18" fill="#a39a82"/>
<rect x="-20" y="46" width="32" height="21" fill="#4a4438"/>
<rect x="80" y="46" width="13" height="18" fill="#4a4438"/>
<rect x="106" y="45" width="44" height="19" fill="#3a382e"/>
<rect x="69" y="77" width="22" height="18" fill="#5a5a38"/>
<rect x="106" y="77" width="44" height="24" fill="#8a8048"/>
<rect x="-20" y="76" width="35" height="16" fill="#9a8a50"/>
<rect x="94" y="44" width="10" height="70" fill="#dcc08c"/></g>
<path d="M22 86H70V108H22Z" fill="#d9a98a"/>
<ellipse cx="20.5" cy="54" rx="4" ry="9" fill="#e2b092"/><ellipse cx="78.5" cy="58" rx="4" ry="9" fill="#e2b092"/>
<ellipse cx="49.5" cy="52" rx="29" ry="38" fill="#e8b999"/>
<ellipse cx="48" cy="60" rx="18" ry="22" fill="#f1c8ac"/>
<path d="M50 .5C34 1 22 10 19.6 22L19 42C22 36 24 30 27.7 26 36 20 44 16 51 15 60 16 68 22 72.3 27.3L76.4 42 80.4 47.6C84 40 84 34 83 30 82 20 78 12 75 12 70 4 60 0 50 .5Z" fill="#5a4030"/>
<path d="M32 40q7-3 14 0M56 42q7-3 14 1" stroke="#6a4a38" stroke-width="2" fill="none"/>
<path d="M34 45q6-2 11 0M57 47q6-2 12 0" stroke="#3a2a22" stroke-width="1.8" fill="none"/>
<path d="M38 64C44 67 54 68 61 66 58 73 42 73 38 64Z" fill="#c97868"/>
<path d="M41 66C46 68 53 68 58 67 55 70 45 70 41 66Z" fill="#fdf3ee"/>
<path d="M-2 92L17 87C24 100 36 109 48 109 58 109 66 101 72 92L99 103 113 117V200H-5Z" fill="#1e2630"/>
</g></g></svg></div>
<h3 class="t" style="left:138.8px;top:17.3px;font-size:18.4px;font-weight:700;color:#111827;letter-spacing:-0.473px;">Ernest Reed</h3>
<span class="i" style="left:141.4px;top:44.7px;"><svg width="18" height="15" viewBox="0 0 18 15" ><path fill="#714b67" d="M2 3h1v12H2a2 2 0 0 1-2-2V5a2 2 0 0 1 2-2z"/><path fill="#714b67" d="M15 3h1a2 2 0 0 1 2 2v8a2 2 0 0 1-2 2h-1z"/><path fill="#714b67" fill-rule="evenodd" d="M4 3h1.5V1.2A1.2 1.2 0 0 1 6.7 0h4.6a1.2 1.2 0 0 1 1.2 1.2V3H14v12H4zM7 1.4V3h4V1.4z"/></svg></span>
<span class="t" style="left:171px;top:45px;font-size:17.5px;letter-spacing:0.014px;">Consultant</span>
<span class="i" style="left:141.4px;top:72.6px;"><svg width="18" height="13.8" viewBox="0 0 18 13" preserveAspectRatio="none"><path fill="#714b67" d="M0 4.3V11.4A1.6 1.6 0 0 0 1.6 13h14.8A1.6 1.6 0 0 0 18 11.4V4.3L10.6 9.7a2.7 2.7 0 0 1-3.2 0z"/><path fill="#714b67" d="M1.6 0A1.6 1.6 0 0 0 0 1.6v.7l8.1 6a1.5 1.5 0 0 0 1.8 0l8.1-6v-.7A1.6 1.6 0 0 0 16.4 0z"/></svg></span>
<span class="t" style="left:171px;top:72px;font-size:17.5px;letter-spacing:-0.247px;">ernest.reed47@example.com</span>
<span class="i" style="left:143.2px;top:98.4px;"><svg width="14.4" height="14.4" viewBox="0 0 1408 1408" ><path fill="#714b67" d="M1408 1112q0 27 -10 70.5t-21 68.5q-21 50 -122 106q-94 51 -186 51q-27 0 -53 -3.5t-57.5 -12.5t-47 -14.5t-55.5 -20.5t-49 -18q-98 -35 -175 -83q-127 -79 -264 -216t-216 -264q-48 -77 -83 -175q-3 -9 -18 -49t-20.5 -55.5t-14.5 -47t-12.5 -57.5t-3.5 -53q0 -92 51 -186q56 -101 106 -122q25 -11 68.5 -21t70.5 -10q14 0 21 3q18 6 53 76q11 19 30 54t35 63.5t31 53.5q3 4 17.5 25t21.5 35.5t7 28.5q0 20 -28.5 50t-62 55t-62 53t-28.5 46q0 9 5 22.5t8.5 20.5t14 24t11.5 19q76 137 174 235t235 174q2 1 19 11.5t24 14t20.5 8.5t22.5 5q18 0 46 -28.5t53 -62t55 -62t50 -28.5q14 0 28.5 7t35.5 21.5t25 17.5q25 15 53.5 31t63.5 35t54 30q70 35 76 53q3 7 3 21z"/></svg></span>
<span class="t" style="left:171px;top:97.5px;font-size:17.5px;letter-spacing:-0.142px;">(555)-518-8232</span>
<i class="dot" style="left:484.4px;top:17px"></i>
<span class="i" style="left:473.6px;top:157.4px;"><svg width="20" height="20" viewBox="0 0 20 20" ><circle cx="10" cy="10" r="8.8" fill="none" stroke="#47505e" stroke-width="2.4"/><path d="M10.6 5.5V11H6.8" fill="none" stroke="#47505e" stroke-width="1.7"/></svg></span>
</article>
</main>
<div class="sb-thumb"></div>
<i class="i" style="left:1904px;top:132px;width:0;height:0;border-left:6.3px solid transparent;border-right:6.3px solid transparent;border-bottom:8px solid #8b8b8b"></i>
<i class="i" style="left:1904px;top:892.5px;width:0;height:0;border-left:6.3px solid transparent;border-right:6.3px solid transparent;border-top:8.5px solid #8b8b8b"></i>
</body></html>
